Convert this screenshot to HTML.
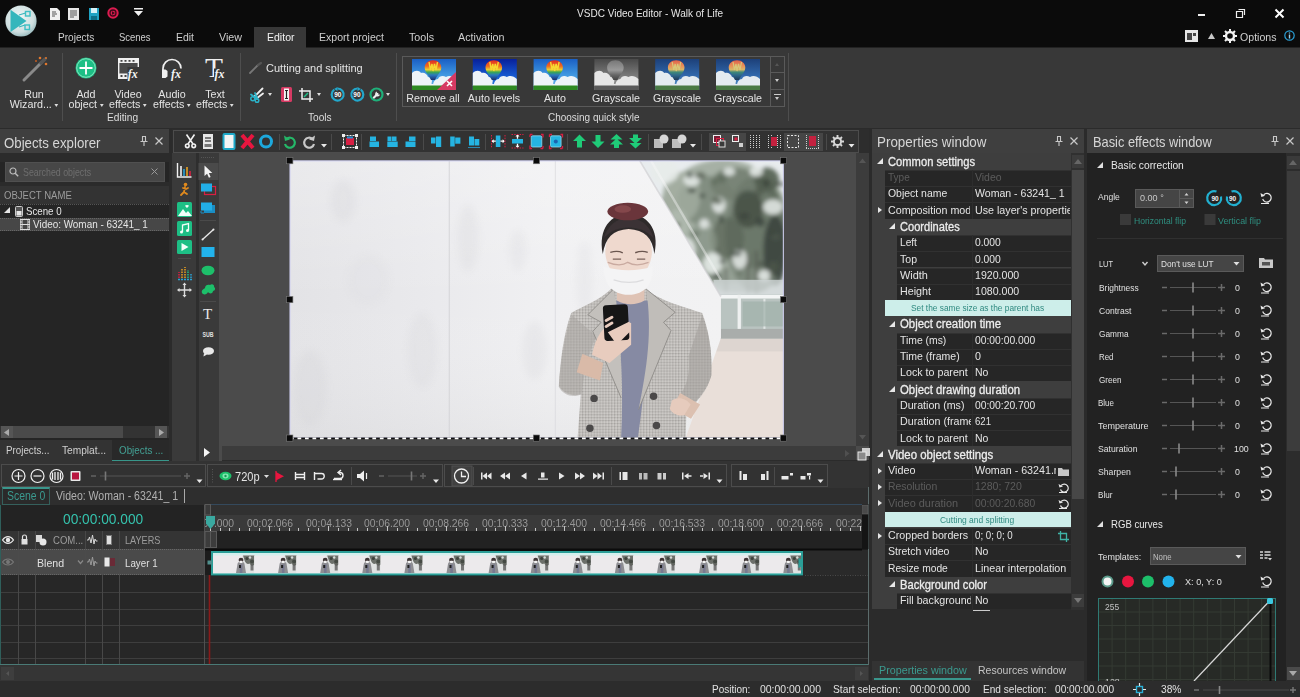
<!DOCTYPE html>
<html><head><meta charset="utf-8"><title>VSDC Video Editor - Walk of Life</title>
<style>
*{box-sizing:border-box;margin:0;padding:0}
html,body{width:1300px;height:697px;overflow:hidden;background:#2b2b2b;font-family:"Liberation Sans",sans-serif;color:#d8d8d8;font-size:11px}
.a{position:absolute}
.t{position:absolute;white-space:nowrap;line-height:1;transform:scaleX(0.93);transform-origin:0 0}
svg{position:absolute;overflow:visible}
#titlebar{left:0;top:0;width:1300px;height:47px;background:#0b0b0b}
#ribbon{left:0;top:47px;width:1300px;height:81px;background:#383838}
.tab{font-size:11.5px;color:#cfcfcf;top:32px}
.rl{font-size:11.5px;color:#e4e4e4;text-align:center;line-height:10.600px;white-space:nowrap;position:absolute;transform:scaleX(0.93)}
.hd{font-size:14.5px;color:#d6d6d6}
.pr{position:absolute;left:0;height:16px;font-size:11.5px;color:#e0e0e0;white-space:nowrap;overflow:hidden;line-height:16px}
.dd{display:inline-block;width:0;height:0;border-left:2.500px solid transparent;border-right:2.500px solid transparent;border-top:3px solid #ddd;margin-left:3px;vertical-align:middle}
.dda{position:absolute;width:0;height:0;border-left:2.500px solid transparent;border-right:2.500px solid transparent;border-top:3px solid #ddd}
</style></head><body>
<div class="a" id="titlebar">
 <div class="a" id="tbblend" style="left:0;top:47px;width:1300px;height:1px;background:#222;z-index:2"></div><div class="a" style="left:254px;top:47px;width:52px;height:1px;background:#383838;z-index:3"></div>
 <!-- logo -->
 <svg style="left:5px;top:4.500px" width="32" height="32" viewBox="0 0 32 32">
  <defs><radialGradient id="lg" cx="45%" cy="40%" r="65%"><stop offset="0" stop-color="#f2f8f8"></stop><stop offset="0.700" stop-color="#cfdfe0"></stop><stop offset="1" stop-color="#8fb4b8"></stop></radialGradient></defs>
  <circle cx="16" cy="16" r="15.600" fill="url(#lg)"></circle>
  <path d="M5.500 4.700V27l16-11.100z" fill="#34b6bc"></path>
  <path d="M14 10l6.500-2M14 22l6-2" stroke="#34b6bc" stroke-width="1.200"></path>
  <rect x="20.500" y="6.500" width="4.500" height="4.500" fill="none" stroke="#3fbfc4" stroke-width="1.400"></rect><rect x="20" y="20" width="4.500" height="4.500" fill="none" stroke="#3fbfc4" stroke-width="1.400"></rect>
 </svg>
 <!-- quick access -->
 <svg style="left:49px;top:8px" width="12" height="12" viewBox="0 0 12 12"><path d="M1 0h7l3 3v9H1z" fill="#f0f0f0"></path><path d="M3 4h4M3 6h5M3 8h3" stroke="#555" stroke-width="1"></path></svg>
 <svg style="left:68px;top:8px" width="11" height="12" viewBox="0 0 11 12"><rect width="11" height="12" fill="#e8e8e8"></rect><path d="M2 3h7M2 5h7M2 7h7M2 9h4" stroke="#555" stroke-width="1"></path></svg>
 <svg style="left:89px;top:8px" width="10" height="12" viewBox="0 0 10 12"><rect width="10" height="12" fill="#1fa3c4"></rect><rect x="2" y="0" width="6" height="5" fill="#d6f2f8"></rect><rect x="2" y="8" width="6" height="4" fill="#0d6f88"></rect></svg>
 <svg style="left:107px;top:7px" width="12" height="12" viewBox="0 0 12 12"><circle cx="6" cy="6" r="5.700" fill="#dc1c50"></circle><circle cx="6" cy="6" r="3" fill="none" stroke="#3a0a18" stroke-width="1.300"></circle><path d="M5 4.300l3 1.700-3 1.700z" fill="#3a0a18"></path></svg>
 <svg style="left:134px;top:8px" width="9" height="8" viewBox="0 0 9 8"><path d="M0 0h9v1.500H0zM0 3h9L4.500 8z" fill="#f0f0f0"></path></svg>
 <div class="t" style="left: 577px; top: 8px; font-size: 11.3px; color: rgb(230, 230, 230); transform: scaleX(0.888);">VSDC Video Editor - Walk of Life</div>
 <!-- window controls -->
 <div class="a" style="left:1198px;top:14px;width:7px;height:2px;background:#f0f0f0"></div>
 <svg style="left:1236px;top:9px" width="9" height="9" viewBox="0 0 9 9"><path d="M2.500 0.500h6v5.500M0.500 2.500h6v6h-6z" fill="none" stroke="#eee" stroke-width="1.200"></path></svg>
 <svg style="left:1275px;top:9px" width="9" height="9" viewBox="0 0 9 9"><path d="M0.500 0.500l8 8M8.500 0.500l-8 8" stroke="#fff" stroke-width="2"></path></svg>
 <!-- tabs -->
 <div class="a" style="left:254px;top:27px;width:52px;height:21px;background:#383838"></div>
 <div class="t tab" style="left: 57.8px; transform: scaleX(0.876);">Projects</div>
 <div class="t tab" style="left: 119.4px; transform: scaleX(0.824);">Scenes</div>
 <div class="t tab" style="left: 176px; transform: scaleX(0.908);">Edit</div>
 <div class="t tab" style="left: 218.5px; transform: scaleX(0.93);">View</div>
 <div class="t tab" style="left: 266.5px; color: rgb(242, 242, 242); transform: scaleX(0.915);">Editor</div>
 <div class="t tab" style="left: 319px; transform: scaleX(0.916);">Export project</div>
 <div class="t tab" style="left: 408.5px; transform: scaleX(0.931);">Tools</div>
 <div class="t tab" style="left: 457.5px; transform: scaleX(0.933);">Activation</div>
 <!-- right options -->
 <svg style="left:1185px;top:30px" width="13" height="12" viewBox="0 0 13 12"><rect x="0.500" y="0.500" width="12" height="11" fill="#e6e6e6" stroke="#e6e6e6"></rect><rect x="2" y="3" width="5" height="7" fill="#444"></rect><rect x="8" y="3" width="3" height="3" fill="#444"></rect></svg>
 <svg style="left:1208px;top:33px" width="7" height="6" viewBox="0 0 7 6"><path d="M0 6L3.500 0 7 6z" fill="#c8c8c8"></path></svg>
 <svg style="left:1223px;top:29px" width="14" height="14" viewBox="0 0 14 14"><circle cx="7" cy="7" r="4" fill="none" stroke="#f2f2f2" stroke-width="2.400"></circle><path d="M7 0v3M7 11v3M0 7h3M11 7h3M2 2l2 2M10 10l2 2M12 2l-2 2M2 12l2-2" stroke="#f2f2f2" stroke-width="2"></path></svg>
 <div class="t" style="left: 1240px; top: 32px; font-size: 11.5px; color: rgb(208, 208, 208); transform: scaleX(0.921);">Options</div>
 <svg style="left:1284px;top:30px" width="11" height="11" viewBox="0 0 11 11"><circle cx="5.500" cy="5.500" r="4.700" fill="none" stroke="#2a9fd6" stroke-width="1.200"></circle><path d="M5.500 4.500v4M5.500 2.500v1" stroke="#8fd0f0" stroke-width="1.400"></path></svg>
</div>

<div class="a" id="ribbon">
 <!-- coordinates relative to ribbon top (47) -->
 <!-- Run wizard -->
 <svg style="left:22px;top:8px" width="27" height="27" viewBox="0 0 27 27"><path d="M2 25L19 8" stroke="#8a8a8a" stroke-width="3" stroke-linecap="round"></path><path d="M19 8l4-4" stroke="#555" stroke-width="3.500" stroke-linecap="round"></path><circle cx="18" cy="3" r="1.300" fill="#e0772d"></circle><circle cx="24" cy="9" r="1.300" fill="#e0772d"></circle><circle cx="14" cy="6" r="1" fill="#c45a1e"></circle><circle cx="24" cy="3" r="1" fill="#e0772d"></circle></svg>
 <div class="rl" style="left:4px;top:41.500px;width:60px">Run<br>Wizard...<span class="dd"></span></div>
 <div class="a" style="left:62px;top:6px;width:1px;height:68px;background:#4e4e4e"></div>
 <!-- Add object -->
 <svg style="left:75px;top:10px" width="22" height="22" viewBox="0 0 22 22"><circle cx="11" cy="11" r="10.500" fill="#1dbf85"></circle><circle cx="11" cy="11" r="9.300" fill="none" stroke="#9ff0cf" stroke-width="0.800"></circle><path d="M11 4.500v13M4.500 11h13" stroke="#fff" stroke-width="1.800"></path></svg>
 <div class="rl" style="left:56px;top:41.500px;width:60px">Add<br>object<span class="dd"></span></div>
 <!-- Video effects -->
 <svg style="left:118px;top:10.500px" width="22" height="21" viewBox="0 0 22 21"><rect x="0.700" y="0.700" width="19.600" height="19.600" fill="#4a4a4a" stroke="#f0f0f0" stroke-width="1.400"></rect><rect x="0.700" y="0.700" width="19.600" height="4.300" fill="#f0f0f0"></rect><rect x="0.700" y="15.500" width="10" height="4.800" fill="#f0f0f0"></rect><path d="M2.500 2.800h2M6.500 2.800h2M10.500 2.800h2M14.500 2.800h2M2.500 18h2M6.500 18h2" stroke="#444" stroke-width="1.800"></path><rect x="9.500" y="9" width="12.500" height="12" fill="#383838"></rect><text x="9.8" y="20" font-family="Liberation Serif,serif" font-style="italic" font-weight="bold" font-size="12" fill="#f4f4f4">fx</text></svg>
 <div class="rl" style="left:98px;top:41.500px;width:60px">Video<br>effects<span class="dd"></span></div>
 <!-- Audio effects -->
 <svg style="left:161px;top:10.500px" width="22" height="21" viewBox="0 0 22 21"><path d="M2 13v-2.500a9 9 0 0 1 18 0V13" fill="none" stroke="#f0f0f0" stroke-width="1.700"></path><path d="M1 11.500h3.500l2 1.500v5.500l-2 1.500H1z" fill="#f0f0f0"></path><path d="M17.500 11.500H21v5h-3.500z" fill="#f0f0f0"></path><rect x="9.500" y="10.500" width="12.500" height="10.500" fill="#383838"></rect><text x="10" y="20" font-family="Liberation Serif,serif" font-style="italic" font-weight="bold" font-size="12" fill="#f4f4f4">fx</text></svg>
 <div class="rl" style="left:142px;top:41.500px;width:60px">Audio<br>effects<span class="dd"></span></div>
 <!-- Text effects -->
 <svg style="left:204.500px;top:9.500px" width="22" height="22" viewBox="0 0 22 22"><text x="0" y="20" font-family="Liberation Serif,serif" font-size="27" fill="#f0f0f0" textLength="18" lengthAdjust="spacingAndGlyphs">T</text><rect x="9" y="11.500" width="13" height="10.500" fill="#383838"></rect><text x="9.5" y="21" font-family="Liberation Serif,serif" font-style="italic" font-weight="bold" font-size="12" fill="#f4f4f4">fx</text></svg>
 <div class="rl" style="left:185px;top:41.500px;width:60px">Text<br>effects<span class="dd"></span></div>
 <div class="t" style="left: 106.5px; top: 65px; font-size: 11.5px; color: rgb(220, 220, 220); transform: scaleX(0.884);">Editing</div>
 <div class="a" style="left:240px;top:6px;width:1px;height:68px;background:#4e4e4e"></div>
 <!-- Tools group -->
 <svg style="left:249px;top:15px" width="13" height="12" viewBox="0 0 13 12"><path d="M1 11L9 3" stroke="#777" stroke-width="1.800" stroke-linecap="round"></path><path d="M9 3l3-2" stroke="#555" stroke-width="2.200" stroke-linecap="round"></path></svg>
 <div class="t" style="left: 265.8px; top: 16px; font-size: 11.8px; color: rgb(228, 228, 228); transform: scaleX(0.933);">Cutting and splitting</div>
 <svg style="left:250px;top:39.500px" width="14" height="16" viewBox="0 0 14 16"><path d="M4.500 9.500L12.500 1.500M6.500 11.500L13 6.500" stroke="#f0f0f0" stroke-width="1.800" stroke-linecap="round"></path><path d="M1 7.500L6 11M5 6l2.500 6" stroke="#2bb3c9" stroke-width="1.800" stroke-linecap="round"></path><circle cx="2.800" cy="11.800" r="2" fill="none" stroke="#2bb3c9" stroke-width="1.500"></circle><circle cx="7" cy="13.500" r="1.800" fill="none" stroke="#2bb3c9" stroke-width="1.500"></circle></svg>
 <div class="dda" style="left:268px;top:46px"></div>
 <svg style="left:280.500px;top:40px" width="11" height="15" viewBox="0 0 11 15"><rect width="11" height="15" rx="1.500" fill="#d63a63"></rect><rect x="3" y="1.500" width="5" height="12" fill="#f4f4f4"></rect><path d="M5.500 3v9M4 3.500h3M4 11.500h3" stroke="#222" stroke-width="1.200"></path></svg>
 <svg style="left:298.500px;top:40.500px" width="14" height="14" viewBox="0 0 14 14"><path d="M3 0v11h11M0 3h11v11" fill="none" stroke="#f0f0f0" stroke-width="1.500"></path><path d="M5 9l4-4" stroke="#1dbf85" stroke-width="1.500"></path></svg>
 <div class="dda" style="left:317px;top:46px"></div>
 <svg style="left:330px;top:40px" width="15" height="15" viewBox="0 0 15 15"><path d="M4.200 2.600a6 6 0 1 0 3.300-1.100" fill="none" stroke="#22a8cc" stroke-width="2.200"></path><path d="M7.500 0v4l-3.500-2z" fill="#22a8cc"></path><text x="4.200" y="10" font-size="6.500" font-weight="bold" fill="#fff" font-family="Liberation Sans,sans-serif">90</text></svg>
 <svg style="left:349.500px;top:40px" width="15" height="15" viewBox="0 0 15 15"><path d="M10.800 2.600a6 6 0 1 1-3.300-1.100" fill="none" stroke="#22a8cc" stroke-width="2.200"></path><path d="M7.500 0v4l3.500-2z" fill="#22a8cc"></path><text x="3.300" y="10" font-size="6.500" font-weight="bold" fill="#fff" font-family="Liberation Sans,sans-serif">90</text></svg>
 <svg style="left:369px;top:40px" width="15" height="15" viewBox="0 0 15 15"><circle cx="7.500" cy="7.500" r="6" fill="none" stroke="#1fb07a" stroke-width="2.200"></circle><path d="M5 10.500l3.500-3.500" stroke="#f0f0f0" stroke-width="2.200" stroke-linecap="round"></path><path d="M8 4.500a2.500 2.500 0 1 0 3 3l-2 .3-1.200-1.200z" fill="#f0f0f0"></path></svg>
 <div class="dda" style="left:386px;top:46px"></div>
 <div class="t" style="left: 308.3px; top: 65px; font-size: 11.5px; color: rgb(220, 220, 220); transform: scaleX(0.882);">Tools</div>
 <div class="a" style="left:396px;top:6px;width:1px;height:68px;background:#4e4e4e"></div>
 <!-- Quick style gallery -->
 <div class="a" style="left:402px;top:9px;width:383px;height:51px;border:1px solid #5a5a5a"></div>
 <div class="a" style="left:770px;top:9px;width:15px;height:51px;border:1px solid #5a5a5a"></div>
 <div class="a" style="left:770px;top:25px;width:15px;height:1px;background:#5a5a5a"></div>
 <div class="a" style="left:770px;top:42px;width:15px;height:1px;background:#5a5a5a"></div>
 <div class="dda" style="left:775px;top:16px;border-top:none;border-bottom:3px solid #555"></div>
 <div class="dda" style="left:775px;top:32px;border-top-color:#ccc"></div>
 <div class="a" style="left:774px;top:47px;width:7px;height:1px;background:#ccc"></div>
 <div class="dda" style="left:775px;top:50px;border-top-color:#ccc"></div>
 <svg style="left:412px;top:12px" width="350" height="31" viewBox="0 0 350 31">
  <defs>
   <linearGradient id="sky" x1="0" y1="0" x2="0" y2="1"><stop offset="0" stop-color="#1a5fc4"></stop><stop offset="0.500" stop-color="#3f97e0"></stop><stop offset="1" stop-color="#6ab4ea"></stop></linearGradient>
   <linearGradient id="sky2" x1="0" y1="0" x2="0" y2="1"><stop offset="0" stop-color="#08209a"></stop><stop offset="0.500" stop-color="#1555cc"></stop><stop offset="1" stop-color="#2f86e4"></stop></linearGradient>
   <linearGradient id="skyg" x1="0" y1="0" x2="0" y2="1"><stop offset="0" stop-color="#4a4a4a"></stop><stop offset="0.500" stop-color="#777"></stop><stop offset="1" stop-color="#999"></stop></linearGradient>
   <linearGradient id="skyd" x1="0" y1="0" x2="0" y2="1"><stop offset="0" stop-color="#1d4079"></stop><stop offset="0.500" stop-color="#2f65a8"></stop><stop offset="1" stop-color="#5a98cc"></stop></linearGradient>
   <linearGradient id="bg1" x1="0" y1="0" x2="0" y2="1"><stop offset="0" stop-color="#e02a22"></stop><stop offset="0.300" stop-color="#ee6a20"></stop><stop offset="0.480" stop-color="#ecd030"></stop><stop offset="0.600" stop-color="#3aa850"></stop><stop offset="0.750" stop-color="#2a78c0"></stop><stop offset="1" stop-color="#1a2f70"></stop></linearGradient>
   <linearGradient id="bg2" x1="0" y1="0" x2="0" y2="1"><stop offset="0" stop-color="#777"></stop><stop offset="0.500" stop-color="#9a9a9a"></stop><stop offset="0.750" stop-color="#666"></stop><stop offset="1" stop-color="#444"></stop></linearGradient>
   <linearGradient id="bg3" x1="0" y1="0" x2="0" y2="1"><stop offset="0" stop-color="#e0604a"></stop><stop offset="0.300" stop-color="#e8925a"></stop><stop offset="0.480" stop-color="#d8b868"></stop><stop offset="0.600" stop-color="#3f8a78"></stop><stop offset="0.750" stop-color="#2f6a8a"></stop><stop offset="1" stop-color="#1f3a5a"></stop></linearGradient>
   <g id="cl"><path d="M0 14c3-3 7-3 9 0c3-1 6 1 7 4c2 0 4 2 4 4l-1 5H0z"></path><path d="M21 27c0-4 2-7 5-7c1-3 5-4 8-2c3-2 7-1 10 2v7z"></path><path d="M14 27c2-3 8-3 10 0z"></path></g>
   <g id="tb"><use href="#cl" fill="#eef4f8"></use><rect x="0" y="26.500" width="44" height="4.500" fill="#2e8a22"></rect><path d="M21 1.200c5 0 8.300 3.300 8.300 7.300c0 4.500-4 7.500-6.300 12.500h-4C16.700 16 12.700 13 12.700 8.500c0-4 3.300-7.300 8.300-7.300z" fill="url(#bg1)"></path><path d="M17 3l1.500 8 1.500-6 1 7 1.500-7 1.500 6 1.500-8" fill="none" stroke="#f6d832" stroke-width="1.400"></path></g>
   <g id="tbg"><use href="#cl" fill="#e6e6e6"></use><rect x="0" y="26.500" width="44" height="4.500" fill="#5a5a5a"></rect><path d="M21 1.200c5 0 8.300 3.300 8.300 7.300c0 4.500-4 7.500-6.300 12.500h-4C16.700 16 12.700 13 12.700 8.500c0-4 3.300-7.300 8.300-7.300z" fill="url(#bg2)"></path></g>
   <g id="tbd"><use href="#cl" fill="#e4ebf0"></use><rect x="0" y="26.500" width="44" height="4.500" fill="#4a7a45"></rect><path d="M21 1.200c5 0 8.300 3.300 8.300 7.300c0 4.500-4 7.500-6.300 12.500h-4C16.700 16 12.700 13 12.700 8.500c0-4 3.300-7.300 8.300-7.300z" fill="url(#bg3)"></path><path d="M17 3l1.500 8 1.500-6 1 7 1.500-7 1.500 6 1.500-8" fill="none" stroke="#d8c878" stroke-width="1.200"></path></g>
  </defs>
  <rect x="0" y="0" width="44" height="31" fill="url(#sky)"></rect><use href="#tb"></use><path d="M44 13L25 31h19z" fill="#d63a63"></path><path d="M35 22l5 5M40 22l-5 5" stroke="#fff" stroke-width="1.600"></path>
  <g transform="translate(60.800 0)"><rect width="44" height="31" fill="url(#sky2)"></rect><use href="#tb"></use></g>
  <g transform="translate(121.600 0)"><rect width="44" height="31" fill="url(#sky)"></rect><use href="#tb"></use></g>
  <g transform="translate(182.400 0)"><rect width="44" height="31" fill="url(#skyg)"></rect><use href="#tbg"></use></g>
  <g transform="translate(243.200 0)"><rect width="44" height="31" fill="url(#skyd)"></rect><use href="#tbd"></use></g>
  <g transform="translate(304 0)"><rect width="44" height="31" fill="url(#skyd)"></rect><use href="#tbd"></use></g>
 </svg>
 <div class="rl" style="left:403px;top:45.500px;width:60px">Remove all</div>
 <div class="rl" style="left:464px;top:45.500px;width:60px">Auto levels</div>
 <div class="rl" style="left:525px;top:45.500px;width:60px">Auto</div>
 <div class="rl" style="left:586px;top:45.500px;width:60px">Grayscale</div>
 <div class="rl" style="left:647px;top:45.500px;width:60px">Grayscale</div>
 <div class="rl" style="left:708px;top:45.500px;width:60px">Grayscale</div>
 <div class="t" style="left: 547.7px; top: 65px; font-size: 11.5px; color: rgb(220, 220, 220); transform: scaleX(0.867);">Choosing quick style</div>
 <div class="a" style="left:788px;top:6px;width:1px;height:68px;background:#4e4e4e"></div>
</div>

<div class="a" id="left" style="left:0;top:130px;width:169px;height:331px;background:#252525">
 <div class="a" style="left:0;top:-1.500px;width:169px;height:24.500px;background:#3f3f3f"></div>
 <div class="t hd" style="left: 4px; top: 5.5px; transform: scaleX(0.914);">Objects explorer</div>
 <svg style="left:140px;top:6px" width="8" height="10" viewBox="0 0 8 10"><path d="M2 0.500h4M2.500 0.500v5M5.500 0.500v5M0.500 5.500h7M4 5.500v4.500" stroke="#c8c8c8" stroke-width="1.100" fill="none"></path></svg>
 <svg style="left:155px;top:7px" width="8" height="8" viewBox="0 0 8 8"><path d="M0.500 0.500l7 7M7.500 0.500l-7 7" stroke="#c8c8c8" stroke-width="1.200"></path></svg>
 <div class="a" style="left:0;top:23px;width:169px;height:9px;background:#2b2b2b"></div>
 <div class="a" style="left:5px;top:32px;width:160px;height:20px;background:#474747;border:1px solid #505050"></div>
 <svg style="left:9px;top:37px" width="10" height="10" viewBox="0 0 10 10"><circle cx="4" cy="4" r="3" fill="none" stroke="#bbb" stroke-width="1.200"></circle><path d="M6.200 6.200l3 3" stroke="#bbb" stroke-width="1.400"></path></svg>
 <div class="t" style="left: 23.3px; top: 37px; font-size: 10.5px; color: rgb(110, 110, 110); transform: scaleX(0.839);">Searched objects</div>
 <svg style="left:151px;top:38px" width="7" height="7" viewBox="0 0 7 7"><path d="M0.500 0.500l6 6M6.500 0.500l-6 6" stroke="#9a9a9a" stroke-width="1"></path></svg>
 <div class="a" style="left:0;top:52px;width:169px;height:4px;background:#2b2b2b"></div>
 <div class="a" style="left:0;top:56px;width:169px;height:18px;background:#333"></div>
 <div class="t" style="left: 4px; top: 60px; font-size: 11px; color: rgb(156, 156, 156); transform: scaleX(0.869);">OBJECT NAME</div>
 <div class="a" style="left:0;top:74px;width:169px;height:1px;border-top:1px dotted #555"></div>
 <!-- Scene 0 -->
 <svg style="left:4px;top:77px" width="6" height="6" viewBox="0 0 6 6"><path d="M0 6h6V0z" fill="#e6e6e6"></path></svg>
 <svg style="left:15px;top:76px" width="8" height="11" viewBox="0 0 8 11"><rect x="0.500" y="0.500" width="7" height="10" rx="1" fill="#555" stroke="#ccc"></rect><rect x="1.500" y="5" width="5" height="4.500" fill="#e6e6e6"></rect></svg>
 <div class="t" style="left: 26px; top: 76px; font-size: 11.5px; color: rgb(230, 230, 230); transform: scaleX(0.844);">Scene 0</div>
 <div class="a" style="left:0;top:88px;width:169px;height:13px;background:#474747;border-top:1px dotted #666;border-bottom:1px dotted #666"></div>
 <svg style="left:20px;top:89px" width="10" height="11" viewBox="0 0 10 11"><rect width="10" height="11" fill="#ddd"></rect><rect x="2.500" y="1" width="5" height="4" fill="#444"></rect><rect x="2.500" y="6" width="5" height="4" fill="#444"></rect><path d="M1.200 1v9M8.800 1v9" stroke="#444" stroke-width="1" stroke-dasharray="1.500 1"></path></svg>
 <div class="t" style="left: 32.6px; top: 89px; font-size: 11.5px; color: rgb(230, 230, 230); transform: scaleX(0.862);">Video: Woman - 63241_ 1</div>
 <!-- scrollbar -->
 <div class="a" style="left:0;top:296px;width:169px;height:12px;background:#333"></div>
 <div class="a" style="left:13px;top:296px;width:110px;height:12px;background:#4a4a4a"></div>
 <div class="a" style="left:1px;top:296px;width:12px;height:12px;background:#555"></div>
 <div class="a" style="left:155px;top:296px;width:12px;height:12px;background:#555"></div>
 <svg style="left:4px;top:299px" width="5" height="7" viewBox="0 0 5 7"><path d="M5 0v7L0 3.500z" fill="#aaa"></path></svg>
 <svg style="left:159px;top:299px" width="5" height="7" viewBox="0 0 5 7"><path d="M0 0v7l5-3.500z" fill="#aaa"></path></svg>
 <!-- bottom tabs -->
 <div class="a" style="left:0;top:310px;width:169px;height:21px;background:#333"></div>
 <div class="t" style="left: 5.7px; top: 315px; font-size: 11.5px; color: rgb(207, 207, 207); transform: scaleX(0.851);">Projects...</div>
 <div class="t" style="left: 61.9px; top: 315px; font-size: 11.5px; color: rgb(207, 207, 207); transform: scaleX(0.884);">Templat...</div>
 <div class="a" style="left:112px;top:310px;width:57px;height:21px;background:#292929"></div><div class="t" style="left: 118.8px; top: 315px; font-size: 11.5px; color: rgb(67, 160, 148); transform: scaleX(0.854);">Objects ...</div>
 <div class="a" style="left:112px;top:329.500px;width:57px;height:2px;background:#38968a"></div>
</div>

<div class="a" id="center" style="left:172px;top:130px;width:697px;height:331px;background:#4b4b4b">
 <!-- top toolbar -->
 <div class="a" style="left:0;top:-1px;width:697px;height:24px;background:#2d2d2d"></div>
 <div class="a" style="left:1px;top:0;width:686px;height:22.500px;background:#323232;border:1px solid #4c4c4c"></div>
  <!-- toolbar icons: coordinates relative to center (x-172, y-130) -->
 <svg style="left:0;top:0.200px" width="697" height="24" viewBox="172 130 697 24">
  <g stroke="#4a4a4a" stroke-width="1"><path d="M279.500 134v16M331.500 134v16M361.500 134v16M423.500 134v16M485.500 134v16M567.500 134v16M648.500 134v16M701.500 134v16M826.500 134v16"></path></g>
  <!-- scissors -->
  <g fill="none" stroke="#f2f2f2" stroke-width="1.600"><path d="M186.500 134.500l6.500 9.500M194.500 134.500l-6.500 9.500"></path><circle cx="187.300" cy="145.800" r="1.800"></circle><circle cx="193.700" cy="145.800" r="1.800"></circle></g>
  <!-- doc -->
  <rect x="203" y="134" width="10" height="15" fill="#e8e8e8"></rect><path d="M205 138h6M205 141h6" stroke="#555" stroke-width="1.600"></path><rect x="204.500" y="144" width="7" height="3" fill="#777"></rect>
  <!-- paste blue -->
  <rect x="223.500" y="134" width="11" height="15" rx="1" fill="#f4f4f4" stroke="#1fa9c9" stroke-width="2"></rect>
  <!-- red X -->
  <path d="M242 135l11 13M253 135l-11 13" stroke="#e8163f" stroke-width="4"></path>
  <!-- blue O -->
  <circle cx="266" cy="141.500" r="5.500" fill="none" stroke="#1da8dc" stroke-width="3"></circle>
  <!-- undo green -->
  <path d="M286.500 139a5 5 0 1 1-1.500 5" fill="none" stroke="#25b869" stroke-width="2.200"></path><path d="M284 135.500l1 5.500 5-1.500z" fill="#25b869"></path>
  <!-- redo gray -->
  <path d="M312.500 139a5 5 0 1 0 1.500 5" fill="none" stroke="#c8c8c8" stroke-width="2.200"></path><path d="M315 135.500l-1 5.500-5-1.500z" fill="#c8c8c8"></path>
  <path d="M321 144h6l-3 3.500z" fill="#e8e8e8"></path>
  <!-- select all -->
  <rect x="343.500" y="135.500" width="13" height="12" fill="none" stroke="#f0f0f0" stroke-width="1" stroke-dasharray="2 1"></rect><rect x="346" y="138" width="8" height="7" fill="#d91f43"></rect><rect x="347" y="136.500" width="6" height="2" fill="#2a8fd0"></rect>
  <g fill="#f0f0f0"><rect x="342" y="134" width="3" height="3"></rect><rect x="355" y="134" width="3" height="3"></rect><rect x="342" y="146" width="3" height="3"></rect><rect x="355" y="146" width="3" height="3"></rect></g>
  <!-- align group 1 -->
  <g fill="#25b4e2"><rect x="370" y="136.500" width="6" height="4.500"></rect><rect x="369.500" y="141.500" width="9.500" height="5.500"></rect>
   <rect x="387.500" y="136.500" width="4" height="4.500"></rect><rect x="392" y="136.500" width="4.500" height="4.500"></rect><rect x="387.300" y="141.500" width="10.400" height="5.500"></rect>
   <rect x="409" y="136.500" width="6.500" height="4.500"></rect><rect x="405.500" y="141.500" width="10" height="5.500"></rect>
   <rect x="431" y="137.500" width="4.500" height="6"></rect><rect x="436" y="136.500" width="5.200" height="10.500"></rect>
   <rect x="450.200" y="136.500" width="4.500" height="10"></rect><rect x="455.200" y="137.500" width="5.200" height="6.200"></rect>
   <rect x="469" y="136.500" width="5" height="9"></rect><rect x="474.500" y="139" width="4.800" height="6.500"></rect></g>
  <path d="M468 147.500h12" stroke="#2a88b0" stroke-width="1"></path>
  <!-- center group -->
  <g><rect x="495.800" y="135.500" width="4.600" height="11.500" fill="#25b4e2"></rect><path d="M492.500 141.200h3.300M500.500 141.200h3.300" stroke="#fff" stroke-width="1.300"></path><path d="M491.500 141.200l2.200-2v4zM504.800 141.200l-2.200-2v4z" fill="#fff"></path><path d="M491.500 135v12.500M505 135v12.500" stroke="#d91f43" stroke-width="1" stroke-dasharray="1.500 1.200"></path>
   <rect x="512" y="139" width="11" height="4.500" fill="#25b4e2"></rect><path d="M517.500 135.500v3.300M517.500 143.700v3.300" stroke="#fff" stroke-width="1.300"></path><path d="M517.500 134.300l-2 2.200h4zM517.500 148l-2-2.200h4z" fill="#fff"></path><path d="M511.500 134.500h12M511.500 148h12" stroke="#d91f43" stroke-width="1" stroke-dasharray="1.500 1.200"></path>
   <rect x="530" y="134.500" width="13" height="14" fill="none" stroke="#d91f43" stroke-width="1.300" stroke-dasharray="2.500 8.500 2.500 0"></rect><rect x="531.200" y="135.800" width="10.600" height="11.200" rx="1.500" fill="#25b4e2" stroke="#9fe3f7" stroke-width="0.700"></rect>
   <rect x="549.500" y="134.500" width="13" height="14" fill="none" stroke="#d91f43" stroke-width="1.300" stroke-dasharray="2.500 8.500 2.500 0"></rect><rect x="550.500" y="135.800" width="10.600" height="11.200" rx="1.500" fill="#25b4e2" stroke="#9fe3f7" stroke-width="0.700"></rect><circle cx="555.800" cy="141.400" r="2" fill="#1b63b0"></circle></g>
  <!-- green arrows -->
  <g fill="#1fcb78"><path d="M579.500 134.500l6.500 6.500h-4v6.500h-5V141h-4z"></path><path d="M598 148l6.500-6.500h-4V135h-5v6.500h-4z"></path>
   <path d="M616.500 134l6 5.500h-12zM616.500 138.500l6.500 6h-4v3.500h-5v-3.500h-4z"></path><path d="M635.500 148.500l6-5.500h-12zM635.500 144l6.500-6h-4v-3.500h-5v3.500h-4z"></path></g>
  <!-- shapes -->
  <g><rect x="654" y="139" width="9" height="9" fill="#bdbdbd"></rect><circle cx="664" cy="139" r="4.500" fill="#d6d6d6"></circle>
   <rect x="672" y="139" width="9" height="9" fill="#bdbdbd"></rect><circle cx="682" cy="139" r="4.500" fill="#d6d6d6"></circle><path d="M690 144h6l-3 3.500z" fill="#e8e8e8"></path></g>
  <!-- highlighted group -->
  <rect x="709" y="133" width="37" height="18" fill="#464646"></rect><rect x="784" y="133" width="39" height="18" fill="#464646"></rect>
  <g fill="none"><rect x="713.500" y="135.500" width="7" height="7" fill="#7a1c34" stroke="#f0f0f0"></rect><rect x="716.500" y="138.500" width="7" height="7" stroke="#d91f43"></rect><rect x="719" y="141" width="6" height="6" fill="#3a3a3a" stroke="#ddd"></rect>
   <rect x="732.500" y="135.500" width="6" height="6" stroke="#f0f0f0"></rect><rect x="734.500" y="137.500" width="3" height="3" fill="#d91f43"></rect><rect x="739" y="143" width="4" height="4" fill="#d0d0d0"></rect></g>
  <g stroke="#cfcfcf" stroke-width="1" stroke-dasharray="1 1"><path d="M750.500 135v13M753.500 135v13M756.500 135v13M759.500 135v13"></path></g>
  <g stroke="#cfcfcf" stroke-width="1" stroke-dasharray="1 1"><path d="M768.500 135v13M771.500 135v13M777.500 135v13M780.500 135v13"></path></g><rect x="771" y="137" width="6" height="9" fill="#c4213f"></rect>
  <rect x="787.500" y="135.500" width="11" height="12" fill="none" stroke="#e8e8e8" stroke-dasharray="2 1.500"></rect>
  <g stroke="#cfcfcf" stroke-width="1" stroke-dasharray="1 1"><path d="M806.500 135v13M818.500 135v13M806 148.500h13"></path></g><rect x="809" y="136" width="7" height="10" fill="#c4213f"></rect>
  <!-- gear -->
  <circle cx="837.500" cy="141.500" r="3.600" fill="none" stroke="#d8d8d8" stroke-width="2"></circle><path d="M837.500 135v2.500M837.500 145.500v2.500M831 141.500h2.500M841.500 141.500h2.500M833 137l1.800 1.800M840.200 144.200l1.800 1.800M842 137l-1.800 1.800M833 146l1.800-1.800" stroke="#d8d8d8" stroke-width="1.900"></path>
  <path d="M848.500 144h6l-3 3.500z" fill="#e8e8e8"></path>
 </svg>

 <!-- left tool columns -->
 <div class="a" style="left:0;top:23px;width:24px;height:308px;background:#3a3a3a"></div>
 <div class="a" style="left:27px;top:23px;width:19.500px;height:308px;background:#3a3a3a"></div>
 <div class="a" style="left:24px;top:23px;width:3px;height:308px;background:#2e2e2e"></div>
 
  <svg style="left:0;top:24px" width="50" height="307" viewBox="172 154 50 307">
  <!-- col1 -->
  <g><path d="M177.500 163v14h14" stroke="#f0f0f0" stroke-width="1.400" fill="none"></path><path d="M181 166v10" stroke="#f0f0f0" stroke-width="1.600"></path><path d="M184 169v7" stroke="#2aa3d6" stroke-width="1.600"></path><path d="M187 167v9" stroke="#e8a020" stroke-width="1.600"></path><path d="M190 171v5" stroke="#d91f43" stroke-width="1.600"></path></g>
  <g stroke="#e08a1e" fill="#e08a1e"><circle cx="185.500" cy="184.500" r="1.800" stroke="none"></circle><path d="M185 187l-1 5 3 2M184 192l-3 3M183 188l3 1 2-1" fill="none" stroke-width="1.800" stroke-linecap="round"></path></g>
  <rect x="177" y="202" width="15" height="15" rx="1.500" fill="#1dbf85"></rect><path d="M178 216l5-7 3 4 2-2 4 5z" fill="#f2fff9"></path><path d="M187 205.500c.8-1 2.200 0 1.500 1l-1.500 1.600-1.500-1.600c-.7-1 .7-2 1.500-1z" fill="#f2fff9"></path>
  <rect x="177" y="221" width="15" height="15" rx="1.500" fill="#1dbf85"></rect><path d="M182.500 232v-7l6-1.500v7" fill="none" stroke="#f2fff9" stroke-width="1.300"></path><circle cx="181.500" cy="232" r="1.500" fill="#f2fff9"></circle><circle cx="187.500" cy="230.500" r="1.500" fill="#f2fff9"></circle>
  <rect x="177" y="240" width="15" height="14" rx="1.500" fill="#1dbf85"></rect><path d="M181.500 243v8l7-4z" fill="#f2fff9"></path>
  <path d="M178 258.500h13" stroke="#4a4a4a"></path>
  <g stroke-width="1.500" stroke-dasharray="1.500 1"><path d="M179 278v-6" stroke="#d91f43"></path><path d="M182 278v-9" stroke="#e8a020"></path><path d="M185 278v-11" stroke="#e8a020"></path><path d="M188 278v-8" stroke="#1dbf85"></path><path d="M191 278v-5" stroke="#2aa3d6"></path><path d="M178 279.500h14" stroke="#2aa3d6" stroke-dasharray="2 1"></path></g>
  <g stroke="#dcdcdc" stroke-width="1.400" fill="#dcdcdc"><path d="M184.500 284v12M178.500 290h12"></path><path d="M184.500 282.500l2 2.500h-4zM184.500 297.500l2-2.500h-4zM177 290l2.500-2v4zM192 290l-2.500-2v4z" stroke="none"></path></g>
  <!-- col2 -->
  <path d="M201 157.500h14" stroke="#555" stroke-dasharray="1 1"></path>
  <rect x="198.500" y="163" width="20" height="17" fill="#4a4a4a"></rect>
  <path d="M204.500 165.500v10.500l2.600-2.200 1.800 4 1.700-.8-1.800-4h3.500z" fill="#f4f4f4"></path>
  <rect x="204.500" y="186.500" width="11" height="8" fill="none" stroke="#d91f43" stroke-width="1.200"></rect><rect x="201" y="183.500" width="11" height="8" fill="#22aee6"></rect>
  <rect x="204" y="205" width="11" height="8" fill="#1a8ec4"></rect><rect x="201" y="202.500" width="11" height="8" fill="#22aee6"></rect><path d="M201 211v2M204 213h-3" stroke="#1a8ec4"></path>
  <path d="M200 220.500h16" stroke="#4a4a4a"></path>
  <path d="M202.500 239.500l11-10" stroke="#e8e8e8" stroke-width="1.400"></path><circle cx="202.500" cy="239.500" r="1" fill="#e8e8e8"></circle><circle cx="213.500" cy="229.500" r="1" fill="#e8e8e8"></circle>
  <rect x="201.500" y="247" width="13" height="10" fill="#22b3ec"></rect>
  <ellipse cx="208" cy="270.500" rx="6.500" ry="4.800" fill="#1dbf6a"></ellipse>
  <path d="M202 293c-1-3 2-4 3-5c0-3 3-4 5-3c2-2 5 0 4 2c2 1 1 4-1 4c0 3-4 3-5 1c-1 3-5 3-6 1z" fill="#1dbf6a"></path>
  <path d="M200 301.500h16" stroke="#4a4a4a"></path>
  <text x="203" y="319" font-family="Liberation Serif,serif" font-size="15" fill="#e8e8e8">T</text>
  <text x="202.500" y="337" font-family="Liberation Sans,sans-serif" font-size="8" font-weight="bold" fill="#e0e0e0" textLength="11" lengthAdjust="spacingAndGlyphs">SUB</text>
  <ellipse cx="208.500" cy="351" rx="5.500" ry="3.800" fill="#e8e8e8"></ellipse><path d="M204 353l-.5 3.500 3.500-2z" fill="#e8e8e8"></path>
  <path d="M204 448v9l6-4.500z" fill="#f4f4f4"></path>
  <path d="M228.500 449.500v6l-3.500-3z" fill="#505050"></path>
 </svg>

 <!-- scrollbars -->
 <div class="a" style="left:683.500px;top:23px;width:13.500px;height:293px;background:#3c3c3c"></div><svg style="left:687px;top:28px" width="7" height="5" viewBox="0 0 7 5"><path d="M0 5l3.500-4.500L7 5z" fill="#555"></path></svg><svg style="left:687px;top:305px" width="7" height="5" viewBox="0 0 7 5"><path d="M0 0l3.500 4.500L7 0z" fill="#555"></path></svg>
 <div class="a" style="left:50px;top:316px;width:634px;height:14px;background:#3c3c3c"></div>
 <div class="a" style="left:50px;top:330px;width:647px;height:1px;background:#2b2b2b"></div><svg id="hs-right" style="left:673px;top:320px" width="5" height="7" viewBox="0 0 5 7"><path d="M0 0v7l4.500-3.500z" fill="#505050"></path></svg>
 <svg style="left:686px;top:318px" width="12" height="12" viewBox="0 0 12 12"><rect x="4" y="0" width="8" height="8" fill="#cfcfcf"></rect><rect x="0" y="4" width="8" height="8" fill="#8a8a8a" stroke="#e8e8e8" stroke-width="1"></rect></svg>
 <!-- photo -->
 <svg style="left:113px;top:25px" width="505" height="290" viewBox="0 0 1214 697">
  <defs>
   <linearGradient id="wall" x1="0" y1="0" x2="1" y2="0"><stop offset="0" stop-color="#e3e3e6"></stop><stop offset="0.300" stop-color="#e9e9ec"></stop><stop offset="0.600" stop-color="#f0f0f2"></stop><stop offset="1" stop-color="#f2f2f3"></stop></linearGradient>
   <linearGradient id="wallv" x1="0" y1="0" x2="0" y2="1"><stop offset="0" stop-color="#fff" stop-opacity="0.250"></stop><stop offset="0.500" stop-color="#fff" stop-opacity="0"></stop><stop offset="1" stop-color="#ccc" stop-opacity="0.200"></stop></linearGradient>
   <pattern id="chk" width="7" height="7" patternUnits="userSpaceOnUse"><rect width="7" height="7" fill="#c0bebb"></rect><path d="M0 1.500h7M1.500 0v7" stroke="#9c9a98" stroke-width="1.500"></path><path d="M0 5h7M5 0v7" stroke="#dad8d5" stroke-width="1.200"></path></pattern>
   <filter id="bl" x="-5%" y="-5%" width="110%" height="110%"><feGaussianBlur stdDeviation="1.600"></feGaussianBlur></filter>
   <filter id="bl2" x="-10%" y="-10%" width="120%" height="120%"><feGaussianBlur stdDeviation="5"></feGaussianBlur></filter>
   <filter id="bl3" x="-10%" y="-10%" width="120%" height="120%"><feGaussianBlur stdDeviation="9"></feGaussianBlur></filter>
   <clipPath id="pc"><rect x="12" y="14" width="1186" height="666"></rect></clipPath>
  </defs>
  <g clip-path="url(#pc)">
   <rect x="12" y="14" width="1186" height="666" fill="#e8ecee"></rect>
   <g filter="url(#bl2)"><ellipse cx="1053" cy="160" rx="160" ry="150" fill="#9aa698" opacity="0.85"></ellipse><ellipse cx="1133" cy="190" rx="75" ry="140" fill="#667264" opacity="0.9"></ellipse><ellipse cx="1013" cy="110" rx="70" ry="60" fill="#7e8a7c" opacity="0.85"></ellipse><ellipse cx="953" cy="100" rx="45" ry="60" fill="#a2ada0" opacity="0.8"></ellipse><ellipse cx="1083" cy="70" rx="60" ry="40" fill="#727e70" opacity="0.85"></ellipse><ellipse cx="1178" cy="230" rx="28" ry="85" fill="#3e4840" opacity="0.95"></ellipse><ellipse cx="1113" cy="130" rx="35" ry="45" fill="#485247" opacity="0.9"></ellipse><ellipse cx="1063" cy="200" rx="40" ry="50" fill="#5e6a5c" opacity="0.85"></ellipse><ellipse cx="1003" cy="210" rx="35" ry="45" fill="#8a9688" opacity="0.8"></ellipse><ellipse cx="1158" cy="60" rx="30" ry="30" fill="#525e50" opacity="0.9"></ellipse><ellipse cx="943" cy="170" rx="25" ry="40" fill="#b4beb2" opacity="0.7"></ellipse><ellipse cx="1093" cy="300" rx="90" ry="30" fill="#8c988c" opacity="0.6"></ellipse><ellipse cx="978" cy="60" rx="20" ry="15" fill="#e8ecea" opacity="0.85"></ellipse><ellipse cx="1043" cy="120" rx="16" ry="20" fill="#e8ecea" opacity="0.85"></ellipse><ellipse cx="1173" cy="125" rx="24" ry="18" fill="#e8ecea" opacity="0.85"></ellipse><ellipse cx="1093" cy="250" rx="18" ry="24" fill="#e8ecea" opacity="0.85"></ellipse><ellipse cx="1028" cy="260" rx="22" ry="26" fill="#e8ecea" opacity="0.85"></ellipse><ellipse cx="1133" cy="40" rx="16" ry="12" fill="#e8ecea" opacity="0.85"></ellipse><ellipse cx="963" cy="230" rx="24" ry="32" fill="#e8ecea" opacity="0.85"></ellipse><ellipse cx="913" cy="40" rx="34" ry="28" fill="#e8ecea" opacity="0.85"></ellipse><ellipse cx="1068" cy="40" rx="14" ry="10" fill="#e8ecea" opacity="0.85"></ellipse><ellipse cx="1153" cy="290" rx="16" ry="14" fill="#e8ecea" opacity="0.85"></ellipse><ellipse cx="1008" cy="165" rx="12" ry="12" fill="#e8ecea" opacity="0.85"></ellipse><ellipse cx="1174" cy="268" rx="12" ry="13" fill="#4e584c" opacity="0.65"></ellipse><ellipse cx="1037" cy="292" rx="12" ry="7" fill="#3a443c" opacity="0.65"></ellipse><ellipse cx="1171" cy="185" rx="7" ry="6" fill="#3a443c" opacity="0.65"></ellipse><ellipse cx="1145" cy="261" rx="7" ry="5" fill="#3a443c" opacity="0.65"></ellipse><ellipse cx="973" cy="48" rx="8" ry="8" fill="#3a443c" opacity="0.65"></ellipse><ellipse cx="1180" cy="197" rx="12" ry="8" fill="#4e584c" opacity="0.65"></ellipse><ellipse cx="1093" cy="285" rx="5" ry="6" fill="#5a6658" opacity="0.65"></ellipse><ellipse cx="1085" cy="238" rx="13" ry="6" fill="#323a34" opacity="0.65"></ellipse><ellipse cx="1104" cy="147" rx="13" ry="9" fill="#3a443c" opacity="0.65"></ellipse><ellipse cx="978" cy="85" rx="11" ry="6" fill="#323a34" opacity="0.65"></ellipse><ellipse cx="1140" cy="64" rx="5" ry="5" fill="#4e584c" opacity="0.65"></ellipse><ellipse cx="1050" cy="56" rx="12" ry="11" fill="#5a6658" opacity="0.65"></ellipse><ellipse cx="1157" cy="67" rx="8" ry="9" fill="#323a34" opacity="0.65"></ellipse><ellipse cx="987" cy="189" rx="10" ry="5" fill="#5a6658" opacity="0.65"></ellipse><ellipse cx="1003" cy="98" rx="8" ry="6" fill="#3a443c" opacity="0.65"></ellipse><ellipse cx="973" cy="268" rx="12" ry="7" fill="#4e584c" opacity="0.65"></ellipse><ellipse cx="1172" cy="290" rx="8" ry="7" fill="#5a6658" opacity="0.65"></ellipse><ellipse cx="1139" cy="89" rx="11" ry="11" fill="#4e584c" opacity="0.65"></ellipse><ellipse cx="943" cy="168" rx="9" ry="5" fill="#4e584c" opacity="0.65"></ellipse><ellipse cx="1038" cy="231" rx="6" ry="5" fill="#4e584c" opacity="0.65"></ellipse><ellipse cx="1052" cy="256" rx="9" ry="5" fill="#323a34" opacity="0.65"></ellipse><ellipse cx="1094" cy="227" rx="6" ry="6" fill="#3a443c" opacity="0.65"></ellipse><ellipse cx="1049" cy="154" rx="5" ry="10" fill="#323a34" opacity="0.65"></ellipse><ellipse cx="1175" cy="95" rx="12" ry="7" fill="#5a6658" opacity="0.65"></ellipse><ellipse cx="1036" cy="108" rx="9" ry="8" fill="#4e584c" opacity="0.65"></ellipse><ellipse cx="1040" cy="111" rx="13" ry="8" fill="#5a6658" opacity="0.65"></ellipse><ellipse cx="1190" cy="70" rx="11" ry="5" fill="#3a443c" opacity="0.65"></ellipse><ellipse cx="998" cy="49" rx="13" ry="9" fill="#4e584c" opacity="0.65"></ellipse><ellipse cx="1143" cy="161" rx="11" ry="12" fill="#323a34" opacity="0.65"></ellipse><ellipse cx="1032" cy="65" rx="7" ry="8" fill="#5a6658" opacity="0.65"></ellipse>
    <path d="M1113 240v95M1133 230v105M1060 270v60" stroke="#4a4a44" stroke-width="5" opacity="0.700"></path>
   </g>
   <g filter="url(#bl)">
    <rect x="1030" y="300" width="170" height="40" fill="#cfd6d6" opacity="0.800"></rect>
    <rect x="1040" y="335" width="160" height="105" fill="#b9c3c0"></rect>
    <rect x="1045" y="336" width="155" height="9" fill="#f3f5f5"></rect><rect x="1088" y="336" width="8" height="100" fill="#eef0f0"></rect><rect x="1150" y="345" width="5" height="90" fill="#dfe4e3"></rect>
    <rect x="1100" y="352" width="100" height="60" fill="#9fb0aa" opacity="0.700"></rect>
    <rect x="1040" y="418" width="160" height="24" fill="#a9adab"></rect>
    <rect x="940" y="442" width="260" height="240" fill="#e9dfd9"></rect>
    <rect x="940" y="442" width="260" height="30" fill="#ddd5d0"></rect>
   </g>
   <!-- wall -->
   <path d="M12 14H853L1048 340V440L963 680H12z" fill="url(#wall)"></path>
   <path d="M12 14H853L1048 340V440L963 680H12z" fill="url(#wallv)"></path>
   <g filter="url(#bl3)" opacity="0.240">
    <ellipse cx="140" cy="110" rx="30" ry="50" fill="#cfcfd4"></ellipse><ellipse cx="440" cy="200" rx="25" ry="80" fill="#d2d2d6"></ellipse><ellipse cx="330" cy="470" rx="35" ry="90" fill="#d4d4d8"></ellipse><ellipse cx="600" cy="470" rx="30" ry="70" fill="#d2d2d6"></ellipse><ellipse cx="60" cy="560" rx="40" ry="90" fill="#d0d0d4"></ellipse><ellipse cx="560" cy="230" rx="20" ry="50" fill="#d6d6da"></ellipse><ellipse cx="200" cy="300" rx="50" ry="60" fill="#dcdce0"></ellipse><ellipse cx="720" cy="300" rx="20" ry="90" fill="#d8d8dc"></ellipse>
   </g>
   <g filter="url(#bl)" opacity="0.700">
    <path d="M395 14V680" stroke="#d2d2d6" stroke-width="3"></path><path d="M650 14V680" stroke="#dcdce0" stroke-width="3"></path>
    <path d="M853 14L1048 340" stroke="#d0d0d3" stroke-width="4"></path><path d="M880 14L1048 300" stroke="#f8f8f8" stroke-width="6" opacity="0.600"></path>
   </g>
   <!-- woman (coords: zx+613) -->
   <g filter="url(#bl)">
    <!-- jacket main -->
    <path d="M688 380c30-18 70-30 100-62l75 0c30 30 90 45 140 62c15 40 25 90 22 150c-10 40-40 70-60 85l-2 70H703l8-110c-25 5-45-5-52-20c2-60 12-130 29-175z" fill="url(#chk)"></path>
    <!-- left arm shading -->
    <path d="M690 385c-18 50-28 110-32 172c10 20 35 28 55 18c5-45 15-95 35-140z" fill="#a9a6a2" opacity="0.550"></path>
    <path d="M1003 385c18 45 24 95 22 145c-10 35-35 60-58 82l-22-28c20-25 30-60 25-100z" fill="#a29f9b" opacity="0.550"></path>
    <!-- sweater -->
    <path d="M796 350h88c0 60-10 130-20 200c-5 50-10 90-16 132h-40c6-110 0-230-12-332z" fill="#868aa3"></path>
    <!-- lapels -->
    <path d="M790 322l-62 62 32 18-20 22 68 160c2-90-4-180-18-262z" fill="#c3c0bc"></path>
    <path d="M868 322l70 56-28 24 18 20-78 190c20-100 34-190 18-290z" fill="#c0bdb9"></path>
    <path d="M790 322l-62 62 32 18-20 22 68 160" fill="none" stroke="#8a8784" stroke-width="2"></path>
    <path d="M868 322l70 56-28 24 18 20-78 190" fill="none" stroke="#8a8784" stroke-width="2"></path>
    <!-- cuffs -->
    <path d="M715 478l50 22-8 42-56-20z" fill="#d9baa8"></path>
    <path d="M950 572l48 28-22 34-46-26z" fill="#dcc0b0"></path>
    <path d="M930 590c15-10 35-5 45 10l-15 25c-15 5-30-5-35-15z" fill="#e6cbbd"></path>
    <!-- neck/face -->
    <path d="M798 300h66v50c-20 12-46 12-66 0z" fill="#dfc3b5"></path>
    <ellipse cx="826" cy="232" rx="56" ry="68" fill="#efd9ce"></ellipse>
    <!-- hair -->
    <path d="M764 238c-12-62 20-96 62-96s76 34 62 96c-4-38-24-58-62-60c-38 2-56 22-62 60z" fill="#2f2a2c"></path>
    <path d="M766 200c10-30 30-48 60-50c30 2 52 20 60 50c-16-18-36-26-60-26s-44 8-60 26z" fill="#3a3234"></path>
    <ellipse cx="824" cy="136" rx="49" ry="21" fill="#6b363b"></ellipse><ellipse cx="812" cy="130" rx="20" ry="9" fill="#84474c"></ellipse>
    <!-- brows/glasses -->
    <path d="M782 234c10-3 22-3 30 1M842 235c10-4 22-4 30-1" stroke="#6a5650" stroke-width="3.500" fill="none"></path><path d="M788 250h20M846 250h20" stroke="#7a625a" stroke-width="3"></path>
    <path d="M776 258c20 8 36 8 48 0c14 8 30 8 50 0" stroke="#c9aaa0" stroke-width="3" fill="none"></path>
    <!-- mask -->
    <path d="M766 268c40 12 80 12 118 0c2 40-18 68-58 68s-60-28-60-68z" fill="#f4f4f5"></path>
    <path d="M790 300c25 8 50 8 72 0" stroke="#dcdcde" stroke-width="3" fill="none"></path>
    <!-- hand & phone -->
    <path d="M738 480c8-42 28-72 58-84l36 8v52l-52 44z" fill="#e8ccbe"></path>
    <rect x="766" y="360" width="60" height="86" rx="8" fill="#141417" transform="rotate(-3 796 403)"></rect>
    <path d="M776 426l52-26 4 22-34 34z" fill="#e8ccbe"></path>
    <path d="M772 398l14-8M772 412l14-8" stroke="#e8ccbe" stroke-width="7" stroke-linecap="round"></path>
    <!-- buttons -->
    <circle cx="743" cy="585" r="9" fill="#4c4a4a"></circle><circle cx="886" cy="580" r="9" fill="#4c4a4a"></circle><circle cx="733" cy="657" r="9" fill="#4c4a4a"></circle><circle cx="893" cy="650" r="9" fill="#4c4a4a"></circle>
   </g>
  </g>
  <!-- selection border -->
  <rect x="12" y="14" width="1186" height="666" fill="none" stroke="#cfcff0" stroke-width="2.500"></rect>
  <path d="M12 681H1198" stroke="#111" stroke-width="4"></path><path d="M12 681H1198" stroke="#fff" stroke-width="4" stroke-dasharray="9 9"></path>
  <g fill="#0a0a0a" stroke="#777" stroke-width="1.500"><rect x="4" y="6" width="15" height="15"></rect><rect x="597" y="6" width="15" height="15"></rect><rect x="1191" y="6" width="15" height="15"></rect><rect x="4" y="340" width="15" height="15"></rect><rect x="1191" y="340" width="15" height="15"></rect><rect x="4" y="673" width="15" height="15"></rect><rect x="597" y="673" width="15" height="15"></rect><rect x="1191" y="673" width="15" height="15"></rect></g>
 </svg>
</div>

<div class="a" id="timeline" style="left:0;top:461px;width:869px;height:220px;background:#333">
<div class="a" style="left:1px;top:3px;width:205px;height:23px;background:#323232;border:1px solid #4c4c4c"></div>
<div class="a" style="left:207px;top:3px;width:236px;height:23px;background:#323232;border:1px solid #4c4c4c"></div>
<div class="a" style="left:444px;top:3px;width:283px;height:23px;background:#323232;border:1px solid #4c4c4c"></div>
<div class="a" style="left:731px;top:3px;width:97px;height:23px;background:#323232;border:1px solid #4c4c4c"></div>
<svg style="left:0;top:0.500px" width="869" height="27" viewBox="0 461 869 27">
<g fill="none" stroke="#f2f2f2" stroke-width="1.200"><circle cx="18.500" cy="475" r="6.500"></circle><path d="M14.500 475h8M18.500 471v8"></path><circle cx="37.500" cy="475" r="6.500"></circle><path d="M33.500 475h8"></path><circle cx="56.500" cy="475" r="6.500"></circle><path d="M52.500 471.500v7M55 471v8M58 471v8M60.500 471.500v7" stroke-width="1.300"></path></g>
<rect x="70.500" y="470" width="10" height="10" rx="1" fill="#e8e8e8"></rect><rect x="72" y="471.500" width="7" height="7" fill="#b8163f"></rect>
<path d="M91 475h5" stroke="#666" stroke-width="1.400"></path><path d="M100 475h81" stroke="#555" stroke-width="1"></path><path d="M105.500 470.500v9" stroke="#777" stroke-width="1.600"></path><path d="M184 475h6M187 472v6" stroke="#666" stroke-width="1.400"></path>
<path d="M196.500 478.500h6l-3 3.500z" fill="#e8e8e8"></path>
<path d="M212.500 468v14" stroke="#555" stroke-dasharray="1 1.500"></path>
<ellipse cx="225.500" cy="475" rx="6" ry="4.200" fill="#1dbf6a"></ellipse><ellipse cx="225.500" cy="475" rx="3" ry="2.400" fill="#7fe8b0"></ellipse><circle cx="225.500" cy="475" r="1.200" fill="#159a55"></circle>
<path d="M264 474h5l-2.500 3z" fill="#ddd"></path>
<path d="M276 471v8.500l8-4.200z" fill="#e8163f"></path><path d="M276 470v11" stroke="#e8163f" stroke-width="1.300"></path>
<g stroke="#eee" stroke-width="1.400" fill="none"><path d="M295.500 471v8M304.500 471v8M295.500 473.500h9M295.500 476.500h9"></path><path d="M314.500 471v8M314.500 472.500h7a2.500 2.500 0 0 1 0 5.500h-4"></path><path d="M334 477.500h6a3 3 0 0 0 0-6h-1"></path><path d="M341 469l-3 2.500 3 2.500"></path><path d="M333 478.500h9"></path></g>
<path d="M351.500 466v18" stroke="#4a4a4a"></path>
<path d="M357 473h3l4-3.500v11l-4-3.500h-3z" fill="#eee"></path><path d="M366.500 472v6" stroke="#eee" stroke-width="1.200"></path>
<path d="M379 475h5" stroke="#666" stroke-width="1.400"></path><path d="M388 475h29" stroke="#555"></path><path d="M411.500 470.500v9" stroke="#777" stroke-width="1.600"></path><path d="M420 475h6M423 472v6" stroke="#666" stroke-width="1.400"></path>
<path d="M433 478.500h6l-3 3.500z" fill="#e8e8e8"></path>
<rect x="452" y="465" width="20" height="20" fill="#404040" stroke="#505050"></rect><circle cx="461.500" cy="475" r="7" fill="none" stroke="#f2f2f2" stroke-width="1.300"></circle><path d="M461.500 470.500v5h4.500" fill="none" stroke="#f2f2f2" stroke-width="1.300"></path>
<path d="M473.500 466v18M611.500 466v18" stroke="#4a4a4a"></path>
<g fill="#e8e8e8">
<path d="M481 471.500h1.500v7H481zM487 471.500v7l-4.500-3.500zM491.500 471.500v7l-4.500-3.500z"></path>
<path d="M505 471.500v7l-5-3.500zM510 471.500v7l-5-3.500z"></path>
<path d="M526.500 471.500v7l-5.500-3.500z"></path>
<path d="M541 471.500h3.500v5H541zM538 477.500h10v1.200h-10z"></path>
<path d="M559 471.500v7l5.500-3.500z"></path>
<path d="M575 471.500v7l5-3.500zM580 471.500v7l5-3.500z"></path>
<path d="M593 471.500v7l4.500-3.500zM597.500 471.500v7l4.500-3.500zM602.500 471.500h1.500v7h-1.500z"></path>
<path d="M619.500 471h1.500v8h-1.500zM622.500 471h5v8h-5z"></path><path d="M639 472h3v6.500h-3zM643.500 472h4v6.500h-4z" fill="#bbb"></path><path d="M657.500 472h4v6.500h-4zM663 472h3v6.500h-3z" fill="#ccc"></path>
<path d="M682 471.500h1.500v7H682zM688.500 472v6l-4.500-3zM688 474.300h3.500v1.400H688z"></path>
<path d="M708.500 471.500h1.500v7h-1.500zM703.500 472v6l4.500-3zM700 474.300h4v1.400h-4z"></path>
<path d="M716.500 478.500h6l-3 3.500z"></path>
<path d="M739.500 470h2v9h-2zM743 473h4v6h-4z"></path><path d="M766.500 470h2v9h-2zM761 473h4v6h-4z"></path>
<path d="M781.500 475h7v3.500h-7zM790 472h3v2.500h-3z"></path><path d="M800.500 475h5v3.500h-5zM807 472h4v2.500h-4zM809 475h1.200v3.500H809z"></path>
<path d="M817.500 478.500h6l-3 3.500z"></path>
</g>
<path d="M774.500 466v18" stroke="#4a4a4a"></path>
</svg>
<div class="t" style="left: 235px; top: 9px; font-size: 13px; color: rgb(228, 228, 228); transform: scaleX(0.851);">720p</div>
<div class="a" style="left:0;top:27px;width:869px;height:17px;background:#2e2e2e"></div>
<div class="a" style="left:2px;top:26px;width:48px;height:18px;background:#2a2a2a;border:1px solid #35605c;border-top:2px solid #3a968c"></div>
<div class="t" style="left: 7px; top: 29px; font-size: 12px; color: rgb(59, 154, 143); transform: scaleX(0.87);">Scene 0</div>
<div class="t" style="left: 56px; top: 29px; font-size: 12px; color: rgb(176, 176, 176); transform: scaleX(0.878);">Video: Woman - 63241_ 1</div>
<div class="a" style="left:184px;top:28px;width:1px;height:14px;background:#aaa"></div>
<div class="a" style="left:0;top:44px;width:869px;height:160px;background:#272727"></div>
<div class="a" style="left:0;top:44px;width:205px;height:26px;background:#232323"></div>
<div class="t" style="left: 62.5px; top: 50px; font-size: 15px; color: rgb(53, 195, 174); transform: scaleX(0.916);">00:00:00.000</div>
<div class="a" style="left:0;top:70px;width:205px;height:18px;background:#343434"></div>
<div class="a" style="left:0;top:88px;width:205px;height:26px;background:#4a4a4a;border-top:1px dotted #666;border-bottom:1px dotted #666"></div>
<div class="t" style="left: 52.8px; top: 73.7px; font-size: 11.5px; color: rgb(156, 156, 156); transform: scaleX(0.829);">COM...</div>
<div class="t" style="left: 124.6px; top: 73.7px; font-size: 11.5px; color: rgb(156, 156, 156); transform: scaleX(0.795);">LAYERS</div>
<div class="t" style="left: 37.3px; top: 97.3px; font-size: 11.5px; color: rgb(224, 224, 224); transform: scaleX(0.921);">Blend</div>
<div class="t" style="left: 125px; top: 97.3px; font-size: 11.5px; color: rgb(224, 224, 224); transform: scaleX(0.85);">Layer 1</div>
<div class="a" style="left:205px;top:43px;width:664px;height:1px;background:#34495c"></div>
<div class="a" style="left:205px;top:44px;width:664px;height:10px;background:#313131"></div>
<div class="a" style="left:205px;top:54px;width:664px;height:16.500px;background:#3a3a3a"></div>
<div class="a" style="left:205px;top:70px;width:664px;height:18px;background:#222"></div>
<div class="a" style="left:205px;top:88px;width:664px;height:26px;background:#1c1c1c"></div>
<div class="a" style="left:803px;top:89px;width:66px;height:25px;background:#2a2a2a"></div>
<div class="a" style="left:205px;top:52px;width:657px;height:18px;overflow:hidden">
<div class="t" style="left:-17.2px;top:4.500px;font-size:10.800px;color:#969696;transform:scaleX(0.96)">00:00.000</div>
<div class="t" style="left:41.6px;top:4.500px;font-size:10.800px;color:#969696;transform:scaleX(0.96)">00:02.066</div>
<div class="t" style="left:100.5px;top:4.500px;font-size:10.800px;color:#969696;transform:scaleX(0.96)">00:04.133</div>
<div class="t" style="left:159.4px;top:4.500px;font-size:10.800px;color:#969696;transform:scaleX(0.96)">00:06.200</div>
<div class="t" style="left:218.3px;top:4.500px;font-size:10.800px;color:#969696;transform:scaleX(0.96)">00:08.266</div>
<div class="t" style="left:277.2px;top:4.500px;font-size:10.800px;color:#969696;transform:scaleX(0.96)">00:10.333</div>
<div class="t" style="left:336.1px;top:4.500px;font-size:10.800px;color:#969696;transform:scaleX(0.96)">00:12.400</div>
<div class="t" style="left:395.0px;top:4.500px;font-size:10.800px;color:#969696;transform:scaleX(0.96)">00:14.466</div>
<div class="t" style="left:453.9px;top:4.500px;font-size:10.800px;color:#969696;transform:scaleX(0.96)">00:16.533</div>
<div class="t" style="left:512.8px;top:4.500px;font-size:10.800px;color:#969696;transform:scaleX(0.96)">00:18.600</div>
<div class="t" style="left:571.7px;top:4.500px;font-size:10.800px;color:#969696;transform:scaleX(0.96)">00:20.666</div>
<div class="t" style="left:630.6px;top:4.500px;font-size:10.800px;color:#969696;transform:scaleX(0.96)">00:22.733</div>
</div>
<svg style="left:0;top:0" width="869" height="220" viewBox="0 461 869 220">
<path d="M210.5 526v5M220.5 528v3M229.5 528v3M239.5 528v3M249.5 528v3M259.5 528v3M269.5 526v5M279.5 528v3M289.5 528v3M298.5 528v3M308.5 528v3M318.5 528v3M328.5 526v5M338.5 528v3M348.5 528v3M357.5 528v3M367.5 528v3M377.5 528v3M387.5 526v5M397.5 528v3M407.5 528v3M417.5 528v3M426.5 528v3M436.5 528v3M446.5 526v5M456.5 528v3M466.5 528v3M476.5 528v3M486.5 528v3M495.5 528v3M505.5 526v5M515.5 528v3M525.5 528v3M535.5 528v3M545.5 528v3M554.5 528v3M564.5 526v5M574.5 528v3M584.5 528v3M594.5 528v3M604.5 528v3M614.5 528v3M623.5 526v5M633.5 528v3M643.5 528v3M653.5 528v3M663.5 528v3M673.5 528v3M683.5 526v5M692.5 528v3M702.5 528v3M712.5 528v3M722.5 528v3M732.5 528v3M742.5 526v5M751.5 528v3M761.5 528v3M771.5 528v3M781.5 528v3M791.5 528v3M801.5 526v5M811.5 528v3M820.5 528v3M830.5 528v3M840.5 528v3M850.5 528v3M860.5 526v5" stroke="#c4c4c4" stroke-width="1"></path>
<path d="M0 592.5H868" stroke="#3e3e3e" stroke-width="1"></path>
<path d="M0 609.5H868" stroke="#3e3e3e" stroke-width="1"></path>
<path d="M0 625.5H868" stroke="#3e3e3e" stroke-width="1"></path>
<path d="M0 642.5H868" stroke="#3e3e3e" stroke-width="1"></path>
<path d="M0 658.5H868" stroke="#3e3e3e" stroke-width="1"></path>
<path d="M18.5 575V665" stroke="#484848" stroke-width="1"></path>
<path d="M18.5 531V575" stroke="#4c4c4c" stroke-width="1" opacity="0.800"></path>
<path d="M35.5 575V665" stroke="#484848" stroke-width="1"></path>
<path d="M35.5 531V575" stroke="#4c4c4c" stroke-width="1" opacity="0.800"></path>
<path d="M85.5 575V665" stroke="#484848" stroke-width="1"></path>
<path d="M85.5 531V575" stroke="#4c4c4c" stroke-width="1" opacity="0.800"></path>
<path d="M102.5 575V665" stroke="#484848" stroke-width="1"></path>
<path d="M102.5 531V575" stroke="#4c4c4c" stroke-width="1" opacity="0.800"></path>
<path d="M119.5 575V665" stroke="#484848" stroke-width="1"></path>
<path d="M119.5 531V575" stroke="#4c4c4c" stroke-width="1" opacity="0.800"></path>
<path d="M204.500 505V665" stroke="#505050" stroke-width="1"></path>
<path d="M0.500 505V664" fill="none" stroke="#2f5f5b" stroke-width="1"></path><path d="M0 664.500H868.500" fill="none" stroke="#4a7a76" stroke-width="1"></path><path d="M868.500 487V665" stroke="#5c6c6c" stroke-width="1"></path>
<path d="M805 575.500H868" stroke="#4a4a4a" stroke-width="1" stroke-dasharray="1 1.500"></path>
<rect x="205" y="504.500" width="5.500" height="10.500" fill="#3a3a3a" stroke="#5a5a5a"></rect>
<rect x="205" y="531.500" width="11.500" height="16" fill="#3c3c3c" stroke="#5a5a5a"></rect><path d="M210.500 531.500v16" stroke="#5a5a5a"></path>
<path d="M206 516h9v7.500l-4.500 5.500-4.500-5.500z" fill="#3aa9a0"></path>
<path d="M209.500 575V664" stroke="#8a1a1a" stroke-width="1.600"></path>
<rect x="205" y="548.500" width="657" height="2" fill="#0c0c0c"></rect><rect x="211" y="550" width="592" height="26" fill="#0c0c0c"></rect>
<rect x="212" y="552" width="590" height="22.500" fill="#d4f0ee" stroke="#2b9e97" stroke-width="2"></rect>
<defs><g id="thm"><rect x="0" y="0" width="42.600" height="17.500" fill="#eceaec"></rect><rect x="30" y="0" width="12.600" height="17.500" fill="#e0e2e2"></rect><path d="M31 0h11.600v9c-2 2-4 1-5-1c-2 1-4 0-5-3z" fill="#6c706a"></path><circle cx="35" cy="3" r="1.500" fill="#3e423c"></circle><circle cx="40" cy="6" r="2" fill="#454a44"></circle><circle cx="38" cy="2" r="1.200" fill="#d8dcd8"></circle><rect x="38.500" y="9" width="3" height="6" fill="#4a4a4a" opacity="0.700"></rect><path d="M25.500 8.500c0-3.500 7-3.500 7 0l1.500 9h-10z" fill="#8e8e92"></path><rect x="27.800" y="9" width="2.600" height="8.500" fill="#787a90"></rect><circle cx="29" cy="4.600" r="2.400" fill="#3e3434"></circle><rect x="27.300" y="5.200" width="3.400" height="2.300" rx="1" fill="#f4f4f4"></rect><rect x="27" y="9.500" width="2" height="3" fill="#222"></rect></g></defs>
<clipPath id="clipc"><rect x="213" y="555" width="588" height="18"></rect></clipPath><g clip-path="url(#clipc)">
<use href="#thm" x="212.0" y="555.500"></use>
<use href="#thm" x="254.1" y="555.500"></use>
<use href="#thm" x="296.2" y="555.500"></use>
<use href="#thm" x="338.3" y="555.500"></use>
<use href="#thm" x="380.4" y="555.500"></use>
<use href="#thm" x="422.5" y="555.500"></use>
<use href="#thm" x="464.6" y="555.500"></use>
<use href="#thm" x="506.7" y="555.500"></use>
<use href="#thm" x="548.8" y="555.500"></use>
<use href="#thm" x="590.9" y="555.500"></use>
<use href="#thm" x="633.0" y="555.500"></use>
<use href="#thm" x="675.1" y="555.500"></use>
<use href="#thm" x="717.2" y="555.500"></use>
<use href="#thm" x="759.3" y="555.500"></use>
</g>
<path d="M798.500 558v10l4-2v-6z" fill="#2b9e97"></path>
<path d="M207.500 560.500h4.500v4h-4.500z" fill="#4f8f8c"></path>
<g fill="none" stroke="#e8e8e8" stroke-width="1.200"><path d="M2.500 540c3-4.500 8-4.500 11 0c-3 4.500-8 4.500-11 0z"></path><circle cx="8" cy="540" r="1.600" fill="#e8e8e8"></circle></g>
<rect x="21.500" y="539" width="6" height="5.500" fill="#e0e0e0"></rect><path d="M22.500 539v-2a2 2 0 0 1 4 0v2" fill="none" stroke="#e0e0e0" stroke-width="1.200"></path>
<rect x="36" y="535" width="6" height="7" fill="#d8d8d8"></rect><circle cx="43" cy="542" r="3.500" fill="#e8e8e8"></circle>
<path d="M87 540h1.500l1-3 1.500 6 1.500-8 1.500 9 1-5 1 2h1.500" fill="none" stroke="#d8d8d8" stroke-width="1"></path>
<rect x="106.500" y="535.500" width="5" height="9" fill="#e0e0e0" stroke="#777"></rect>
<g fill="none" stroke="#777" stroke-width="1.100"><path d="M2.500 562c3-4 8-4 11 0c-3 4-8 4-11 0z"></path><circle cx="8" cy="562" r="1.400" fill="#777"></circle></g>
<path d="M78 560.500l2.500 3 2.500-3" fill="none" stroke="#888" stroke-width="1.200"></path>
<path d="M87 562h1.500l1-3 1.500 6 1.500-8 1.500 9 1-5 1 2h1.500" fill="none" stroke="#9a9a9a" stroke-width="1"></path>
<rect x="104.500" y="557.500" width="5" height="9" fill="#e8e8e8"></rect><rect x="110" y="558" width="5" height="8" fill="#6a2a36"></rect>
<rect x="0" y="666" width="869" height="15" fill="#353535"></rect><rect x="1" y="667" width="13" height="13" fill="#3e3e3e"></rect><rect x="855" y="667" width="13" height="13" fill="#3e3e3e"></rect><path d="M9 671v5l-3-2.500z" fill="#555"></path><path d="M860 671v5l3-2.500z" fill="#555"></path>
<rect x="862" y="504" width="6.500" height="45" fill="#141414"></rect><rect x="862.500" y="505" width="5.500" height="9" fill="#4a4a4a" stroke="#666" stroke-width="0.600"></rect>
</svg>
</div>
<div class="a" id="props" style="left:872px;top:130px;width:212px;height:551px;background:#2b2b2b">
<div class="a" style="left:0;top:-1.500px;width:212px;height:24.500px;background:#3f3f3f"></div>
<div class="t hd" style="left: 5px; top: 5.3px; transform: scaleX(0.924);">Properties window</div>
<svg style="left:183px;top:6px" width="8" height="10" viewBox="0 0 8 10"><path d="M2 0.500h4M2.500 0.500v5M5.500 0.500v5M0.500 5.500h7M4 5.500v4.500" stroke="#c8c8c8" stroke-width="1.100" fill="none"></path></svg>
<svg style="left:198px;top:7px" width="8" height="8" viewBox="0 0 8 8"><path d="M0.500 0.500l7 7M7.500 0.500l-7 7" stroke="#c8c8c8" stroke-width="1.200"></path></svg>
<div class="a" style="left:0;top:23px;width:199px;height:455.6px;background:#3e3e3e"></div>
<svg style="left:5px;top:28.1px" width="6" height="6" viewBox="0 0 6 6"><path d="M0 6h6V0z" fill="#e6e6e6"></path></svg>
<div class="t" style="left: 15.8px; top: 25.7px; font-size: 12px; color: rgb(236, 236, 236); -webkit-text-stroke: 0.3px rgb(236, 236, 236); transform: scaleX(0.932);">Common settings</div>
<div class="a" style="left:13px;top:39.9px;width:186px;height:16.3px;background:#262626;border-top:1px solid #313131"></div>
<div class="a" style="left:99.500px;top:39.9px;width:1px;height:16.3px;background:#2d2d2d"></div>
<div class="a" style="left:15.8px;top:42.2px;width:82.7px;height:14px;overflow:hidden"><div class="t" style="left: 0px; top: 0px; font-size: 11.5px; color: rgb(92, 92, 92); transform: scaleX(0.87);">Type</div></div>
<div class="a" style="left:103px;top:42.2px;width:95px;height:14px;overflow:hidden"><div class="t" style="left: 0.4px; top: 0px; font-size: 11.5px; color: rgb(92, 92, 92); transform: scaleX(0.91);">Video</div></div>
<div class="a" style="left:13px;top:56.1px;width:186px;height:16.3px;background:#262626;border-top:1px solid #313131"></div>
<div class="a" style="left:99.500px;top:56.1px;width:1px;height:16.3px;background:#2d2d2d"></div>
<div class="a" style="left:15.8px;top:58.4px;width:82.7px;height:14px;overflow:hidden"><div class="t" style="left: 0px; top: 0px; font-size: 11.5px; color: rgb(228, 228, 228); transform: scaleX(0.908);">Object name</div></div>
<div class="a" style="left:103px;top:58.4px;width:95px;height:14px;overflow:hidden"><div class="t" style="left: 0.4px; top: 0px; font-size: 11.5px; color: rgb(228, 228, 228); transform: scaleX(0.918);">Woman - 63241_ 1</div></div>
<div class="a" style="left:13px;top:72.4px;width:186px;height:16.3px;background:#262626;border-top:1px solid #313131"></div>
<div class="a" style="left:99.500px;top:72.4px;width:1px;height:16.3px;background:#2d2d2d"></div>
<div class="a" style="left:15.8px;top:74.7px;width:82.7px;height:14px;overflow:hidden"><div class="t" style="left:0;top:0;font-size:11.500px;color:#e4e4e4">Composition mode</div></div>
<div class="a" style="left:103px;top:74.7px;width:95px;height:14px;overflow:hidden"><div class="t" style="left:0;top:0;font-size:11.500px;color:#e4e4e4">Use layer's properties</div></div>
<svg style="left:6px;top:77.4px" width="4" height="6" viewBox="0 0 4 6"><path d="M0 0v6l4-3z" fill="#e6e6e6"></path></svg>
<svg style="left:17px;top:93.2px" width="6" height="6" viewBox="0 0 6 6"><path d="M0 6h6V0z" fill="#e6e6e6"></path></svg>
<div class="t" style="left: 28px; top: 90.8px; font-size: 12px; color: rgb(236, 236, 236); -webkit-text-stroke: 0.3px rgb(236, 236, 236); transform: scaleX(0.922);">Coordinates</div>
<div class="a" style="left:25px;top:104.9px;width:174px;height:16.3px;background:#262626;border-top:1px solid #313131"></div>
<div class="a" style="left:99.500px;top:104.9px;width:1px;height:16.3px;background:#2d2d2d"></div>
<div class="a" style="left:28.0px;top:107.2px;width:70.5px;height:14px;overflow:hidden"><div class="t" style="left: 0px; top: 0px; font-size: 11.5px; color: rgb(228, 228, 228); transform: scaleX(0.881);">Left</div></div>
<div class="a" style="left:103px;top:107.2px;width:95px;height:14px;overflow:hidden"><div class="t" style="left: 0.4px; top: 0px; font-size: 11.5px; color: rgb(228, 228, 228); transform: scaleX(0.896);">0.000</div></div>
<div class="a" style="left:25px;top:121.2px;width:174px;height:16.3px;background:#262626;border-top:1px solid #313131"></div>
<div class="a" style="left:99.500px;top:121.2px;width:1px;height:16.3px;background:#2d2d2d"></div>
<div class="a" style="left:28.0px;top:123.5px;width:70.5px;height:14px;overflow:hidden"><div class="t" style="left: 0px; top: 0px; font-size: 11.5px; color: rgb(228, 228, 228); transform: scaleX(0.917);">Top</div></div>
<div class="a" style="left:103px;top:123.5px;width:95px;height:14px;overflow:hidden"><div class="t" style="left: 0.4px; top: 0px; font-size: 11.5px; color: rgb(228, 228, 228); transform: scaleX(0.896);">0.000</div></div>
<div class="a" style="left:25px;top:137.5px;width:174px;height:16.3px;background:#262626;border-top:1px solid #313131"></div>
<div class="a" style="left:99.500px;top:137.5px;width:1px;height:16.3px;background:#2d2d2d"></div>
<div class="a" style="left:28.0px;top:139.8px;width:70.5px;height:14px;overflow:hidden"><div class="t" style="left: 0px; top: 0px; font-size: 11.5px; color: rgb(228, 228, 228); transform: scaleX(0.949);">Width</div></div>
<div class="a" style="left:103px;top:139.8px;width:95px;height:14px;overflow:hidden"><div class="t" style="left: 0.4px; top: 0px; font-size: 11.5px; color: rgb(228, 228, 228); transform: scaleX(0.921);">1920.000</div></div>
<div class="a" style="left:25px;top:153.8px;width:174px;height:16.3px;background:#262626;border-top:1px solid #313131"></div>
<div class="a" style="left:99.500px;top:153.8px;width:1px;height:16.3px;background:#2d2d2d"></div>
<div class="a" style="left:28.0px;top:156.1px;width:70.5px;height:14px;overflow:hidden"><div class="t" style="left: 0px; top: 0px; font-size: 11.5px; color: rgb(228, 228, 228); transform: scaleX(0.932);">Height</div></div>
<div class="a" style="left:103px;top:156.1px;width:95px;height:14px;overflow:hidden"><div class="t" style="left: 0.4px; top: 0px; font-size: 11.5px; color: rgb(228, 228, 228); transform: scaleX(0.921);">1080.000</div></div>
<div class="a" style="left:13px;top:170.0px;width:186px;height:15.8px;background:#cdeeea"></div>
<div class="t" style="left: 38.8px; top: 174px; font-size: 9.3px; color: rgb(47, 138, 128); transform: scaleX(0.898);">Set the same size as the parent has</div>
<svg style="left:17px;top:190.8px" width="6" height="6" viewBox="0 0 6 6"><path d="M0 6h6V0z" fill="#e6e6e6"></path></svg>
<div class="t" style="left: 28px; top: 188.4px; font-size: 12px; color: rgb(236, 236, 236); -webkit-text-stroke: 0.3px rgb(236, 236, 236); transform: scaleX(0.948);">Object creation time</div>
<div class="a" style="left:25px;top:202.6px;width:174px;height:16.3px;background:#262626;border-top:1px solid #313131"></div>
<div class="a" style="left:99.500px;top:202.6px;width:1px;height:16.3px;background:#2d2d2d"></div>
<div class="a" style="left:28.0px;top:204.9px;width:70.5px;height:14px;overflow:hidden"><div class="t" style="left: 0px; top: 0px; font-size: 11.5px; color: rgb(228, 228, 228); transform: scaleX(0.902);">Time (ms)</div></div>
<div class="a" style="left:103px;top:204.9px;width:95px;height:14px;overflow:hidden"><div class="t" style="left: 0.4px; top: 0px; font-size: 11.5px; color: rgb(228, 228, 228); transform: scaleX(0.896);">00:00:00.000</div></div>
<div class="a" style="left:25px;top:218.8px;width:174px;height:16.3px;background:#262626;border-top:1px solid #313131"></div>
<div class="a" style="left:99.500px;top:218.8px;width:1px;height:16.3px;background:#2d2d2d"></div>
<div class="a" style="left:28.0px;top:221.1px;width:70.5px;height:14px;overflow:hidden"><div class="t" style="left: 0px; top: 0px; font-size: 11.5px; color: rgb(228, 228, 228); transform: scaleX(0.913);">Time (frame)</div></div>
<div class="a" style="left:103px;top:221.1px;width:95px;height:14px;overflow:hidden"><div class="t" style="left:0;top:0;font-size:11.500px;color:#e4e4e4">0</div></div>
<div class="a" style="left:25px;top:235.1px;width:174px;height:16.3px;background:#262626;border-top:1px solid #313131"></div>
<div class="a" style="left:99.500px;top:235.1px;width:1px;height:16.3px;background:#2d2d2d"></div>
<div class="a" style="left:28.0px;top:237.4px;width:70.5px;height:14px;overflow:hidden"><div class="t" style="left:0;top:0;font-size:11.500px;color:#e4e4e4">Lock to parent duration</div></div>
<div class="a" style="left:103px;top:237.4px;width:95px;height:14px;overflow:hidden"><div class="t" style="left: 0.4px; top: 0px; font-size: 11.5px; color: rgb(228, 228, 228); transform: scaleX(0.911);">No</div></div>
<svg style="left:17px;top:255.9px" width="6" height="6" viewBox="0 0 6 6"><path d="M0 6h6V0z" fill="#e6e6e6"></path></svg>
<div class="t" style="left: 28px; top: 253.5px; font-size: 12px; color: rgb(236, 236, 236); -webkit-text-stroke: 0.3px rgb(236, 236, 236); transform: scaleX(0.947);">Object drawing duration</div>
<div class="a" style="left:25px;top:267.6px;width:174px;height:16.3px;background:#262626;border-top:1px solid #313131"></div>
<div class="a" style="left:99.500px;top:267.6px;width:1px;height:16.3px;background:#2d2d2d"></div>
<div class="a" style="left:28.0px;top:269.9px;width:70.5px;height:14px;overflow:hidden"><div class="t" style="left: 0px; top: 0px; font-size: 11.5px; color: rgb(228, 228, 228); transform: scaleX(0.925);">Duration (ms)</div></div>
<div class="a" style="left:103px;top:269.9px;width:95px;height:14px;overflow:hidden"><div class="t" style="left: 0.4px; top: 0px; font-size: 11.5px; color: rgb(228, 228, 228); transform: scaleX(0.896);">00:00:20.700</div></div>
<div class="a" style="left:25px;top:283.9px;width:174px;height:16.3px;background:#262626;border-top:1px solid #313131"></div>
<div class="a" style="left:99.500px;top:283.9px;width:1px;height:16.3px;background:#2d2d2d"></div>
<div class="a" style="left:28.0px;top:286.2px;width:70.5px;height:14px;overflow:hidden"><div class="t" style="left:0;top:0;font-size:11.500px;color:#e4e4e4">Duration (frames)</div></div>
<div class="a" style="left:103px;top:286.2px;width:95px;height:14px;overflow:hidden"><div class="t" style="left: 0.4px; top: 0px; font-size: 11.5px; color: rgb(228, 228, 228); transform: scaleX(0.839);">621</div></div>
<div class="a" style="left:25px;top:300.2px;width:174px;height:16.3px;background:#262626;border-top:1px solid #313131"></div>
<div class="a" style="left:99.500px;top:300.2px;width:1px;height:16.3px;background:#2d2d2d"></div>
<div class="a" style="left:28.0px;top:302.5px;width:70.5px;height:14px;overflow:hidden"><div class="t" style="left:0;top:0;font-size:11.500px;color:#e4e4e4">Lock to parent duration</div></div>
<div class="a" style="left:103px;top:302.5px;width:95px;height:14px;overflow:hidden"><div class="t" style="left: 0.4px; top: 0px; font-size: 11.5px; color: rgb(228, 228, 228); transform: scaleX(0.911);">No</div></div>
<svg style="left:5px;top:321.0px" width="6" height="6" viewBox="0 0 6 6"><path d="M0 6h6V0z" fill="#e6e6e6"></path></svg>
<div class="t" style="left: 15.8px; top: 318.6px; font-size: 12px; color: rgb(236, 236, 236); -webkit-text-stroke: 0.3px rgb(236, 236, 236); transform: scaleX(0.952);">Video object settings</div>
<div class="a" style="left:13px;top:332.7px;width:186px;height:16.3px;background:#262626;border-top:1px solid #313131"></div>
<div class="a" style="left:99.500px;top:332.7px;width:1px;height:16.3px;background:#2d2d2d"></div>
<div class="a" style="left:15.8px;top:335.0px;width:82.7px;height:14px;overflow:hidden"><div class="t" style="left: 0px; top: 0px; font-size: 11.5px; color: rgb(228, 228, 228); transform: scaleX(0.938);">Video</div></div>
<div class="a" style="left:103px;top:335.0px;width:95px;height:14px;overflow:hidden"><div class="t" style="left:0;top:0;font-size:11.500px;color:#e4e4e4">Woman - 63241.mp4</div></div>
<svg style="left:6px;top:337.7px" width="4" height="6" viewBox="0 0 4 6"><path d="M0 0v6l4-3z" fill="#e6e6e6"></path></svg>
<div class="a" style="left:13px;top:349.0px;width:186px;height:16.3px;background:#262626;border-top:1px solid #313131"></div>
<div class="a" style="left:99.500px;top:349.0px;width:1px;height:16.3px;background:#2d2d2d"></div>
<div class="a" style="left:15.8px;top:351.3px;width:82.7px;height:14px;overflow:hidden"><div class="t" style="left: 0px; top: 0px; font-size: 11.5px; color: rgb(92, 92, 92); transform: scaleX(0.905);">Resolution</div></div>
<div class="a" style="left:103px;top:351.3px;width:95px;height:14px;overflow:hidden"><div class="t" style="left: 0.4px; top: 0px; font-size: 11.5px; color: rgb(92, 92, 92); transform: scaleX(0.915);">1280; 720</div></div>
<svg style="left:6px;top:354.0px" width="4" height="6" viewBox="0 0 4 6"><path d="M0 0v6l4-3z" fill="#e6e6e6"></path></svg>
<div class="a" style="left:13px;top:365.3px;width:186px;height:16.3px;background:#262626;border-top:1px solid #313131"></div>
<div class="a" style="left:99.500px;top:365.3px;width:1px;height:16.3px;background:#2d2d2d"></div>
<div class="a" style="left:15.8px;top:367.6px;width:82.7px;height:14px;overflow:hidden"><div class="t" style="left: 0px; top: 0px; font-size: 11.5px; color: rgb(92, 92, 92); transform: scaleX(0.949);">Video duration</div></div>
<div class="a" style="left:103px;top:367.6px;width:95px;height:14px;overflow:hidden"><div class="t" style="left: 0.4px; top: 0px; font-size: 11.5px; color: rgb(92, 92, 92); transform: scaleX(0.896);">00:00:20.680</div></div>
<svg style="left:6px;top:370.3px" width="4" height="6" viewBox="0 0 4 6"><path d="M0 0v6l4-3z" fill="#e6e6e6"></path></svg>
<div class="a" style="left:13px;top:381.5px;width:186px;height:15.8px;background:#cdeeea"></div>
<div class="t" style="left: 68.3px; top: 385.5px; font-size: 9.3px; color: rgb(47, 138, 128); transform: scaleX(0.909);">Cutting and splitting</div>
<div class="a" style="left:13px;top:397.8px;width:186px;height:16.3px;background:#262626;border-top:1px solid #313131"></div>
<div class="a" style="left:99.500px;top:397.8px;width:1px;height:16.3px;background:#2d2d2d"></div>
<div class="a" style="left:15.8px;top:400.1px;width:82.7px;height:14px;overflow:hidden"><div class="t" style="left: 0px; top: 0px; font-size: 11.5px; color: rgb(228, 228, 228); transform: scaleX(0.929);">Cropped borders</div></div>
<div class="a" style="left:103px;top:400.1px;width:95px;height:14px;overflow:hidden"><div class="t" style="left: 0.4px; top: 0px; font-size: 11.5px; color: rgb(228, 228, 228); transform: scaleX(0.844);">0; 0; 0; 0</div></div>
<svg style="left:6px;top:402.8px" width="4" height="6" viewBox="0 0 4 6"><path d="M0 0v6l4-3z" fill="#e6e6e6"></path></svg>
<div class="a" style="left:13px;top:414.1px;width:186px;height:16.3px;background:#262626;border-top:1px solid #313131"></div>
<div class="a" style="left:99.500px;top:414.1px;width:1px;height:16.3px;background:#2d2d2d"></div>
<div class="a" style="left:15.8px;top:416.4px;width:82.7px;height:14px;overflow:hidden"><div class="t" style="left: 0px; top: 0px; font-size: 11.5px; color: rgb(228, 228, 228); transform: scaleX(0.916);">Stretch video</div></div>
<div class="a" style="left:103px;top:416.4px;width:95px;height:14px;overflow:hidden"><div class="t" style="left: 0.4px; top: 0px; font-size: 11.5px; color: rgb(228, 228, 228); transform: scaleX(0.911);">No</div></div>
<div class="a" style="left:13px;top:430.4px;width:186px;height:16.3px;background:#262626;border-top:1px solid #313131"></div>
<div class="a" style="left:99.500px;top:430.4px;width:1px;height:16.3px;background:#2d2d2d"></div>
<div class="a" style="left:15.8px;top:432.7px;width:82.7px;height:14px;overflow:hidden"><div class="t" style="left: 0px; top: 0px; font-size: 11.5px; color: rgb(228, 228, 228); transform: scaleX(0.891);">Resize mode</div></div>
<div class="a" style="left:103px;top:432.7px;width:95px;height:14px;overflow:hidden"><div class="t" style="left: 0.4px; top: 0px; font-size: 11.5px; color: rgb(228, 228, 228); transform: scaleX(0.933);">Linear interpolation</div></div>
<svg style="left:17px;top:451.1px" width="6" height="6" viewBox="0 0 6 6"><path d="M0 6h6V0z" fill="#e6e6e6"></path></svg>
<div class="t" style="left: 28px; top: 448.7px; font-size: 12px; color: rgb(236, 236, 236); -webkit-text-stroke: 0.3px rgb(236, 236, 236); transform: scaleX(0.932);">Background color</div>
<div class="a" style="left:25px;top:462.9px;width:174px;height:16.3px;background:#262626;border-top:1px solid #313131"></div>
<div class="a" style="left:99.500px;top:462.9px;width:1px;height:16.3px;background:#2d2d2d"></div>
<div class="a" style="left:28.0px;top:465.2px;width:70.5px;height:14px;overflow:hidden"><div class="t" style="left:0;top:0;font-size:11.500px;color:#e4e4e4">Fill background</div></div>
<div class="a" style="left:103px;top:465.2px;width:95px;height:14px;overflow:hidden"><div class="t" style="left: 0.4px; top: 0px; font-size: 11.5px; color: rgb(228, 228, 228); transform: scaleX(0.911);">No</div></div>
<div class="a" style="left:184px;top:333.7px;width:15px;height:15px;background:#262626"></div>
<svg style="left:186px;top:336.7px" width="11" height="9" viewBox="0 0 11 9"><path d="M0 1h4l1 1.500h6V9H0z" fill="#c8c8c8"></path></svg>
<svg style="left:186px;top:352.0px" width="11" height="11" viewBox="0 0 11 11"><path d="M3.200 3.500a4 4 0 1 1-.7 4" fill="none" stroke="#e8e8e8" stroke-width="1.200"></path><path d="M0.500 2l1 3.500 3.500-1z" fill="#e8e8e8"></path><path d="M1 10.500h8" stroke="#e8e8e8" stroke-width="1"></path></svg>
<svg style="left:186px;top:368.3px" width="11" height="11" viewBox="0 0 11 11"><path d="M3.200 3.500a4 4 0 1 1-.7 4" fill="none" stroke="#e8e8e8" stroke-width="1.200"></path><path d="M0.500 2l1 3.500 3.500-1z" fill="#e8e8e8"></path><path d="M1 10.500h8" stroke="#e8e8e8" stroke-width="1"></path></svg>
<svg style="left:186px;top:400.8px" width="11" height="11" viewBox="0 0 11 11"><path d="M2.500 0v8.500H11M0 2.500h8.500V11" fill="none" stroke="#3fb3a6" stroke-width="1.300"></path></svg>
<div class="a" style="left:101px;top:479.7px;width:17px;height:1px;background:#ccc"></div>
<div class="a" style="left:199px;top:23px;width:13px;height:456.6px;background:#303030"></div>
<div class="a" style="left:200px;top:40px;width:12px;height:329px;background:#474747"></div>
<div class="a" style="left:200px;top:25px;width:12px;height:13px;background:#3c3c3c"></div>
<svg style="left:202px;top:28px" width="8" height="6" viewBox="0 0 8 6"><path d="M0 6l4-5 4 5z" fill="#666"></path></svg>
<div class="a" style="left:200px;top:463.9px;width:12px;height:13px;background:#3c3c3c"></div>
<svg style="left:202px;top:467.9px" width="8" height="6" viewBox="0 0 8 6"><path d="M0 0l4 5 4-5z" fill="#777"></path></svg>
<div class="a" style="left:0;top:531px;width:212px;height:20px;background:#333"></div>
<div class="t" style="left: 7px; top: 535px; font-size: 11.5px; color: rgb(59, 154, 143); transform: scaleX(0.934);">Properties window</div>
<div class="a" style="left:2px;top:548px;width:97px;height:2px;background:#3a968c"></div>
<div class="t" style="left: 105.8px; top: 535px; font-size: 11.5px; color: rgb(196, 196, 196); transform: scaleX(0.914);">Resources window</div>
</div>
<div class="a" id="fx" style="left:1087px;top:130px;width:213px;height:551px;background:#222">
<div class="a" style="left:0;top:-1.500px;width:213px;height:24.500px;background:#3f3f3f"></div>
<div class="t hd" style="left: 5.5px; top: 5.3px; transform: scaleX(0.884);">Basic effects window</div>
<svg style="left:184px;top:6px" width="8" height="10" viewBox="0 0 8 10"><path d="M2 0.500h4M2.500 0.500v5M5.500 0.500v5M0.500 5.500h7M4 5.500v4.500" stroke="#c8c8c8" stroke-width="1.100" fill="none"></path></svg>
<svg style="left:199px;top:7px" width="8" height="8" viewBox="0 0 8 8"><path d="M0.500 0.500l7 7M7.500 0.500l-7 7" stroke="#c8c8c8" stroke-width="1.200"></path></svg>
<div class="a" style="left:199px;top:23px;width:14px;height:528px;background:#2c2c2c"></div>
<div class="a" style="left:200px;top:41px;width:13px;height:280px;background:#3c3c3c"></div>
<div class="a" style="left:200px;top:26px;width:13px;height:13px;background:#3a3a3a"></div>
<svg style="left:202px;top:29px" width="8" height="6" viewBox="0 0 8 6"><path d="M0 6l4-5 4 5z" fill="#666"></path></svg>
<div class="a" style="left:200px;top:537px;width:13px;height:13px;background:#4a4a4a"></div>
<svg style="left:202px;top:541px" width="8" height="6" viewBox="0 0 8 6"><path d="M0 0l4 5 4-5z" fill="#aaa"></path></svg>
<svg style="left:0;top:0" width="213" height="551" viewBox="1087 130 213 551">
<path d="M1097 168h6v-6z" fill="#e0e0e0"></path>
<path d="M1097 527h6v-6z" fill="#e0e0e0"></path>
<rect x="1135.500" y="189.500" width="58" height="18" fill="#454545" stroke="#5a5a5a"></rect><path d="M1179.500 190v17M1180 198.500h13" stroke="#5a5a5a"></path><path d="M1184.500 195.500l2-2.500 2 2.500zM1184.500 201.500l2 2.500 2-2.500z" fill="#d0d0d0"></path>
<g fill="none" stroke="#22b0d0" stroke-width="2.200"><path d="M1216.500 191.500a7 7 0 1 0 4.500 5"></path><path d="M1231.500 191.500a7 7 0 1 1-4.500 5"></path></g>
<rect x="1210.500" y="195" width="9" height="6.500" fill="#222"></rect><rect x="1228.500" y="195" width="9" height="6.500" fill="#222"></rect>
<g font-family="Liberation Sans,sans-serif" font-size="6.500" font-weight="bold" fill="#f4f4f4"><text x="1211.500" y="200.800">90</text><text x="1229" y="200.800">90</text></g>
<g><path d="M1263.7 194.8a4.300 4.300 0 1 1-1 4.200" fill="none" stroke="#e8e8e8" stroke-width="1.200"></path><path d="M1260.5 193l0.800 4 3.800-1.200z" fill="#e8e8e8"></path><path d="M1261 203.5h8" stroke="#e8e8e8" stroke-width="1"></path></g>
<rect x="1120" y="214" width="11" height="11" fill="#3a3a3a"></rect><rect x="1204.500" y="214" width="11" height="11" fill="#3a3a3a"></rect>
<path d="M1097 238.500h186" stroke="#303030"></path>
<path d="M1142.500 262l2.500 3 2.500-3" fill="none" stroke="#d0d0d0" stroke-width="1.400"></path>
<rect x="1157.500" y="255.500" width="86" height="16" fill="#454545" stroke="#5a5a5a"></rect><path d="M1233.500 262h6l-3 3.500z" fill="#e0e0e0"></path>
<path d="M1259 258h5l1 1.500h8v8.500h-14z" fill="#c8c8c8"></path><rect x="1262" y="262" width="8" height="3.500" fill="#555"></rect>
<path d="M1162 287.5h5" stroke="#6a6a6a" stroke-width="1.500"></path><path d="M1170 287.5h46" stroke="#555" stroke-width="1"></path><path d="M1193 282.5v10" stroke="#8a8a8a" stroke-width="1.600"></path><path d="M1218 287.5h7M1221.500 284v7" stroke="#6a6a6a" stroke-width="1.500"></path>
<g><path d="M1263.7 284.3a4.300 4.300 0 1 1-1 4.200" fill="none" stroke="#e8e8e8" stroke-width="1.200"></path><path d="M1260.5 282.5l0.800 4 3.800-1.200z" fill="#e8e8e8"></path><path d="M1261 293h8" stroke="#e8e8e8" stroke-width="1"></path></g>
<path d="M1162 310.5h5" stroke="#6a6a6a" stroke-width="1.500"></path><path d="M1170 310.5h46" stroke="#555" stroke-width="1"></path><path d="M1193 305.5v10" stroke="#8a8a8a" stroke-width="1.600"></path><path d="M1218 310.5h7M1221.500 307v7" stroke="#6a6a6a" stroke-width="1.500"></path>
<g><path d="M1263.7 307.3a4.300 4.300 0 1 1-1 4.200" fill="none" stroke="#e8e8e8" stroke-width="1.200"></path><path d="M1260.5 305.5l0.800 4 3.800-1.200z" fill="#e8e8e8"></path><path d="M1261 316h8" stroke="#e8e8e8" stroke-width="1"></path></g>
<path d="M1162 333.5h5" stroke="#6a6a6a" stroke-width="1.500"></path><path d="M1170 333.5h46" stroke="#555" stroke-width="1"></path><path d="M1193 328.5v10" stroke="#8a8a8a" stroke-width="1.600"></path><path d="M1218 333.5h7M1221.500 330v7" stroke="#6a6a6a" stroke-width="1.500"></path>
<g><path d="M1263.7 330.3a4.300 4.300 0 1 1-1 4.200" fill="none" stroke="#e8e8e8" stroke-width="1.200"></path><path d="M1260.5 328.5l0.800 4 3.800-1.200z" fill="#e8e8e8"></path><path d="M1261 339h8" stroke="#e8e8e8" stroke-width="1"></path></g>
<path d="M1162 356.5h5" stroke="#6a6a6a" stroke-width="1.500"></path><path d="M1170 356.5h46" stroke="#555" stroke-width="1"></path><path d="M1193 351.5v10" stroke="#8a8a8a" stroke-width="1.600"></path><path d="M1218 356.5h7M1221.500 353v7" stroke="#6a6a6a" stroke-width="1.500"></path>
<g><path d="M1263.7 353.3a4.300 4.300 0 1 1-1 4.200" fill="none" stroke="#e8e8e8" stroke-width="1.200"></path><path d="M1260.5 351.5l0.800 4 3.800-1.200z" fill="#e8e8e8"></path><path d="M1261 362h8" stroke="#e8e8e8" stroke-width="1"></path></g>
<path d="M1162 379.5h5" stroke="#6a6a6a" stroke-width="1.500"></path><path d="M1170 379.5h46" stroke="#555" stroke-width="1"></path><path d="M1193 374.5v10" stroke="#8a8a8a" stroke-width="1.600"></path><path d="M1218 379.5h7M1221.500 376v7" stroke="#6a6a6a" stroke-width="1.500"></path>
<g><path d="M1263.7 376.3a4.300 4.300 0 1 1-1 4.200" fill="none" stroke="#e8e8e8" stroke-width="1.200"></path><path d="M1260.5 374.5l0.800 4 3.800-1.200z" fill="#e8e8e8"></path><path d="M1261 385h8" stroke="#e8e8e8" stroke-width="1"></path></g>
<path d="M1162 402.5h5" stroke="#6a6a6a" stroke-width="1.500"></path><path d="M1170 402.5h46" stroke="#555" stroke-width="1"></path><path d="M1193 397.5v10" stroke="#8a8a8a" stroke-width="1.600"></path><path d="M1218 402.5h7M1221.500 399v7" stroke="#6a6a6a" stroke-width="1.500"></path>
<g><path d="M1263.7 399.3a4.300 4.300 0 1 1-1 4.200" fill="none" stroke="#e8e8e8" stroke-width="1.200"></path><path d="M1260.5 397.5l0.800 4 3.800-1.200z" fill="#e8e8e8"></path><path d="M1261 408h8" stroke="#e8e8e8" stroke-width="1"></path></g>
<path d="M1162 425.5h5" stroke="#6a6a6a" stroke-width="1.500"></path><path d="M1170 425.5h46" stroke="#555" stroke-width="1"></path><path d="M1193 420.5v10" stroke="#8a8a8a" stroke-width="1.600"></path><path d="M1218 425.5h7M1221.500 422v7" stroke="#6a6a6a" stroke-width="1.500"></path>
<g><path d="M1263.7 422.3a4.300 4.300 0 1 1-1 4.200" fill="none" stroke="#e8e8e8" stroke-width="1.200"></path><path d="M1260.5 420.5l0.800 4 3.800-1.200z" fill="#e8e8e8"></path><path d="M1261 431h8" stroke="#e8e8e8" stroke-width="1"></path></g>
<path d="M1162 448.5h5" stroke="#6a6a6a" stroke-width="1.500"></path><path d="M1170 448.5h46" stroke="#555" stroke-width="1"></path><path d="M1179 443.5v10" stroke="#8a8a8a" stroke-width="1.600"></path><path d="M1218 448.5h7M1221.500 445v7" stroke="#6a6a6a" stroke-width="1.500"></path>
<g><path d="M1263.7 445.3a4.300 4.300 0 1 1-1 4.200" fill="none" stroke="#e8e8e8" stroke-width="1.200"></path><path d="M1260.5 443.5l0.800 4 3.800-1.200z" fill="#e8e8e8"></path><path d="M1261 454h8" stroke="#e8e8e8" stroke-width="1"></path></g>
<path d="M1162 471.5h5" stroke="#6a6a6a" stroke-width="1.500"></path><path d="M1170 471.5h46" stroke="#555" stroke-width="1"></path><path d="M1176 466.5v10" stroke="#8a8a8a" stroke-width="1.600"></path><path d="M1218 471.5h7M1221.500 468v7" stroke="#6a6a6a" stroke-width="1.500"></path>
<g><path d="M1263.7 468.3a4.300 4.300 0 1 1-1 4.200" fill="none" stroke="#e8e8e8" stroke-width="1.200"></path><path d="M1260.5 466.5l0.800 4 3.800-1.200z" fill="#e8e8e8"></path><path d="M1261 477h8" stroke="#e8e8e8" stroke-width="1"></path></g>
<path d="M1162 494.5h5" stroke="#6a6a6a" stroke-width="1.500"></path><path d="M1170 494.5h46" stroke="#555" stroke-width="1"></path><path d="M1176 489.5v10" stroke="#8a8a8a" stroke-width="1.600"></path><path d="M1218 494.5h7M1221.500 491v7" stroke="#6a6a6a" stroke-width="1.500"></path>
<g><path d="M1263.7 491.3a4.300 4.300 0 1 1-1 4.200" fill="none" stroke="#e8e8e8" stroke-width="1.200"></path><path d="M1260.5 489.5l0.800 4 3.800-1.200z" fill="#e8e8e8"></path><path d="M1261 500h8" stroke="#e8e8e8" stroke-width="1"></path></g>
<rect x="1150.500" y="547.500" width="95" height="17" fill="#454545" stroke="#5a5a5a"></rect><path d="M1235.500 555h6l-3 3.500z" fill="#e0e0e0"></path>
<path d="M1260 552h3M1260 555h3M1260 558h3M1264.500 552h6M1264.500 555h6M1264.500 558h3" stroke="#d8d8d8" stroke-width="1.400"></path><path d="M1268 558h4l-2 2.500z" fill="#d8d8d8"></path>
<circle cx="1107.500" cy="581.500" r="5" fill="#f4f4f4" stroke="#5a9a8a" stroke-width="2"></circle><circle cx="1128" cy="581.500" r="6" fill="#e8163f"></circle><circle cx="1148" cy="581.500" r="6" fill="#1dbf6a"></circle><circle cx="1168.500" cy="581.500" r="6" fill="#22b3ec"></circle>
<g><path d="M1263.7 578.3a4.300 4.300 0 1 1-1 4.200" fill="none" stroke="#e8e8e8" stroke-width="1.200"></path><path d="M1260.5 576.5l0.800 4 3.800-1.200z" fill="#e8e8e8"></path><path d="M1261 587h8" stroke="#e8e8e8" stroke-width="1"></path></g>
<rect x="1098.500" y="598.500" width="177" height="90" fill="#272a26" stroke="#2f7a74"></rect>
<path d="M1112.1 599V681M1125.7 599V681M1139.3 599V681M1152.9 599V681M1166.5 599V681M1180.1 599V681M1193.7 599V681M1207.3 599V681M1220.9 599V681M1234.5 599V681M1248.1 599V681M1261.7 599V681M1099 612.0H1275M1099 625.5H1275M1099 639.0H1275M1099 652.5H1275M1099 666.0H1275M1099 679.5H1275" stroke="#343a33" stroke-width="1"></path>
<path d="M1270.500 600V681" stroke="#0a0a0a" stroke-width="2"></path>
<path d="M1270 600.500L1194 681" stroke="#d8d8d8" stroke-width="1.200"></path>
<rect x="1267" y="598" width="6" height="6" rx="1.500" fill="#3cc8e0"></rect>
</svg>
<div class="t" style="left: 24px; top: 30px; font-size: 11.5px; color: rgb(232, 232, 232); transform: scaleX(0.89);">Basic correction</div>
<div class="t" style="left: 11.2px; top: 62px; font-size: 9.8px; color: rgb(224, 224, 224); transform: scaleX(0.87);">Angle</div>
<div class="t" style="left: 53px; top: 62.5px; font-size: 9.8px; color: rgb(200, 200, 200); transform: scaleX(0.925);">0.00 °</div>
<div class="t" style="left: 47.3px; top: 85.5px; font-size: 9.5px; color: rgb(47, 143, 128); transform: scaleX(0.902);">Horizontal flip</div>
<div class="t" style="left: 131px; top: 85.5px; font-size: 9.5px; color: rgb(47, 143, 128); transform: scaleX(0.932);">Vertical flip</div>
<div class="t" style="left: 11.5px; top: 129px; font-size: 9.5px; color: rgb(224, 224, 224); transform: scaleX(0.78);">LUT</div>
<div class="t" style="left: 73.7px; top: 129px; font-size: 9.5px; color: rgb(224, 224, 224); transform: scaleX(0.869);">Don't use LUT</div>
<div class="t" style="left: 11.5px; top: 152.8px; font-size: 9.5px; color: rgb(224, 224, 224); transform: scaleX(0.884);">Brightness</div>
<div class="t" style="left:147.5px;top:152.8px;font-size:9.5px;color:#e0e0e0;transform:scaleX(0.93)">0</div>
<div class="t" style="left: 11.5px; top: 175.8px; font-size: 9.5px; color: rgb(224, 224, 224); transform: scaleX(0.9);">Contrast</div>
<div class="t" style="left:147.5px;top:175.8px;font-size:9.5px;color:#e0e0e0;transform:scaleX(0.93)">0</div>
<div class="t" style="left: 11.5px; top: 198.8px; font-size: 9.5px; color: rgb(224, 224, 224); transform: scaleX(0.873);">Gamma</div>
<div class="t" style="left:147.5px;top:198.8px;font-size:9.5px;color:#e0e0e0;transform:scaleX(0.93)">0</div>
<div class="t" style="left: 11.5px; top: 221.8px; font-size: 9.5px; color: rgb(224, 224, 224); transform: scaleX(0.832);">Red</div>
<div class="t" style="left:147.5px;top:221.8px;font-size:9.5px;color:#e0e0e0;transform:scaleX(0.93)">0</div>
<div class="t" style="left: 11.5px; top: 244.8px; font-size: 9.5px; color: rgb(224, 224, 224); transform: scaleX(0.852);">Green</div>
<div class="t" style="left:147.5px;top:244.8px;font-size:9.5px;color:#e0e0e0;transform:scaleX(0.93)">0</div>
<div class="t" style="left: 11.2px; top: 267.8px; font-size: 9.5px; color: rgb(224, 224, 224); transform: scaleX(0.841);">Blue</div>
<div class="t" style="left:147.5px;top:267.8px;font-size:9.5px;color:#e0e0e0;transform:scaleX(0.93)">0</div>
<div class="t" style="left: 11.2px; top: 290.8px; font-size: 9.5px; color: rgb(224, 224, 224); transform: scaleX(0.947);">Temperature</div>
<div class="t" style="left:147.5px;top:290.8px;font-size:9.5px;color:#e0e0e0;transform:scaleX(0.93)">0</div>
<div class="t" style="left: 11.2px; top: 313.8px; font-size: 9.5px; color: rgb(224, 224, 224); transform: scaleX(0.912);">Saturation</div>
<div class="t" style="left:146.5px;top:313.8px;font-size:9.5px;color:#e0e0e0;transform:scaleX(0.93)">100</div>
<div class="t" style="left: 11.2px; top: 336.8px; font-size: 9.5px; color: rgb(224, 224, 224); transform: scaleX(0.913);">Sharpen</div>
<div class="t" style="left:147.5px;top:336.8px;font-size:9.5px;color:#e0e0e0;transform:scaleX(0.93)">0</div>
<div class="t" style="left: 11.2px; top: 359.8px; font-size: 9.5px; color: rgb(224, 224, 224); transform: scaleX(0.852);">Blur</div>
<div class="t" style="left:147.5px;top:359.8px;font-size:9.5px;color:#e0e0e0;transform:scaleX(0.93)">0</div>
<div class="t" style="left: 24px; top: 388.5px; font-size: 11.5px; color: rgb(232, 232, 232); transform: scaleX(0.835);">RGB curves</div>
<div class="t" style="left: 11.2px; top: 421.5px; font-size: 9.8px; color: rgb(224, 224, 224); transform: scaleX(0.912);">Templates:</div>
<div class="t" style="left: 66.4px; top: 421.5px; font-size: 9.8px; color: rgb(192, 192, 192); transform: scaleX(0.794);">None</div>
<div class="t" style="left: 98.2px; top: 447px; font-size: 9.5px; color: rgb(224, 224, 224); transform: scaleX(0.959);">X: 0, Y: 0</div>
<div class="t" style="left: 18.2px; top: 472px; font-size: 9.5px; color: rgb(192, 192, 192); transform: scaleX(0.889);">255</div>
<div class="t" style="left:18px;top:546.5px;font-size:9.5px;color:#c0c0c0;transform:scaleX(0.93)">128</div>
</div>
<div class="a" id="status" style="left:0;top:681px;width:1300px;height:16px;background:#2c2c2c">
 <div class="t" style="left: 711.5px; top: 3px; font-size: 11.5px; color: rgb(224, 224, 224); transform: scaleX(0.868);">Position:</div>
 <div class="t" style="left: 760px; top: 3px; font-size: 11.5px; color: rgb(224, 224, 224); transform: scaleX(0.908);">00:00:00.000</div>
 <div class="t" style="left: 833px; top: 3px; font-size: 11.5px; color: rgb(224, 224, 224); transform: scaleX(0.891);">Start selection:</div>
 <div class="t" style="left: 910px; top: 3px; font-size: 11.5px; color: rgb(224, 224, 224); transform: scaleX(0.893);">00:00:00.000</div>
 <div class="t" style="left: 982.5px; top: 3px; font-size: 11.5px; color: rgb(224, 224, 224); transform: scaleX(0.879);">End selection:</div>
 <div class="t" style="left: 1055.4px; top: 3px; font-size: 11.5px; color: rgb(224, 224, 224); transform: scaleX(0.88);">00:00:00.000</div>
 <svg style="left:1133px;top:2px" width="13" height="13" viewBox="0 0 13 13"><rect x="3.500" y="3.500" width="6" height="6" fill="none" stroke="#2ab0d8" stroke-width="1.400"></rect><path d="M6.500 0v3M6.500 10v3M0 6.500h3M10 6.500h3" stroke="#e8e8e8" stroke-width="1.200"></path></svg>
 <div class="t" style="left: 1160.6px; top: 3px; font-size: 11.5px; color: rgb(224, 224, 224); transform: scaleX(0.886);">38%</div>
 <svg style="left:1190px;top:3px" width="110" height="12" viewBox="1190 683 110 12"><path d="M1194 689h5" stroke="#777" stroke-width="1.400"></path><path d="M1203 689h86" stroke="#4a4a4a"></path><path d="M1219.500 685v8" stroke="#888" stroke-width="1.600"></path><path d="M1290 689h6M1293 686v6" stroke="#777" stroke-width="1.400"></path></svg>
</div>


</body></html>
